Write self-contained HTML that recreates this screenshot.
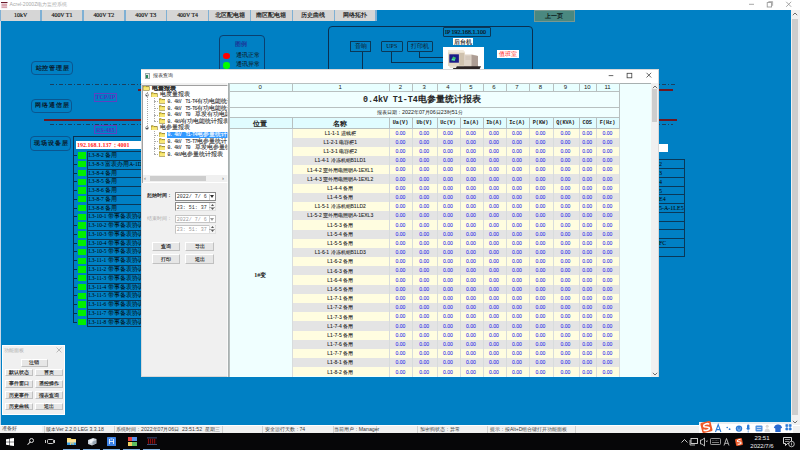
<!DOCTYPE html><html><head><meta charset="utf-8"><style>
*{box-sizing:border-box;margin:0;padding:0}
body{width:800px;height:450px;overflow:hidden;position:relative;background:#0080C4;font-family:"Liberation Sans",sans-serif;}
.a{position:absolute}
.t{position:absolute;white-space:pre;line-height:1}
.bx{position:absolute;border:1px solid #0a3858}
</style></head><body>

<div class="a" style="left:0;top:0;width:800px;height:10px;background:#fff"></div>
<svg class="a" style="left:1px;top:2px" width="6.5" height="6.5" viewBox="0 0 13 13"><rect x="0" y="0" width="13" height="13" fill="#f4eef0"></rect><rect x="0" y="0" width="13" height="2" fill="#6a1a2a"></rect><path d="M1 4.5h11M1 7.5h11M1 10.5h11" stroke="#c06070" stroke-width="1.3"></path></svg>
<div class="t" style="left:9.5px;top:2.2px;font-size:5.1px;color:#a8a8a8">Acrel-2000Z电力监控系统</div>
<svg class="a" style="left:740px;top:0px" width="60" height="10" viewBox="0 0 60 10"><path d="M9 4.3h5" stroke="#909090" stroke-width="0.8"></path><rect x="27.2" y="2.6" width="4.4" height="4.4" fill="none" stroke="#909090" stroke-width="0.8"></rect><path d="M28.4 1.6h4.2v4.2" fill="none" stroke="#909090" stroke-width="0.7"></path><path d="M46.2 1.8l5 5M51.2 1.8l-5 5" stroke="#909090" stroke-width="0.8"></path></svg>
<div class="a" style="left:0;top:10px;width:1px;height:415px;background:#c8d8e8"></div>
<div class="a" style="left:-0.50px;top:10px;width:42.25px;height:11.2px;background:#7fb0d4"></div>
<div class="a" style="left:1.00px;top:10px;width:39.25px;height:11.2px;background:#d6d6d6"></div>
<div class="t" style="left:1.00px;width:39.25px;text-align:center;top:13.35px;font-size:5.9px;color:#101010;-webkit-text-stroke:0.15px #101010;font-family:'Liberation Serif',serif">10kV</div>
<div class="a" style="left:40.25px;top:10px;width:43.40px;height:11.2px;background:#7fb0d4"></div>
<div class="a" style="left:41.75px;top:10px;width:40.40px;height:11.2px;background:#d6d6d6"></div>
<div class="t" style="left:41.75px;width:40.40px;text-align:center;top:13.35px;font-size:5.9px;color:#101010;-webkit-text-stroke:0.15px #101010;font-family:'Liberation Serif',serif">400V T1</div>
<div class="a" style="left:82.15px;top:10px;width:43.40px;height:11.2px;background:#7fb0d4"></div>
<div class="a" style="left:83.65px;top:10px;width:40.40px;height:11.2px;background:#d6d6d6"></div>
<div class="t" style="left:83.65px;width:40.40px;text-align:center;top:13.35px;font-size:5.9px;color:#101010;-webkit-text-stroke:0.15px #101010;font-family:'Liberation Serif',serif">400V T2</div>
<div class="a" style="left:124.05px;top:10px;width:43.40px;height:11.2px;background:#7fb0d4"></div>
<div class="a" style="left:125.55px;top:10px;width:40.40px;height:11.2px;background:#d6d6d6"></div>
<div class="t" style="left:125.55px;width:40.40px;text-align:center;top:13.35px;font-size:5.9px;color:#101010;-webkit-text-stroke:0.15px #101010;font-family:'Liberation Serif',serif">400V T3</div>
<div class="a" style="left:165.95px;top:10px;width:43.40px;height:11.2px;background:#7fb0d4"></div>
<div class="a" style="left:167.45px;top:10px;width:40.40px;height:11.2px;background:#d6d6d6"></div>
<div class="t" style="left:167.45px;width:40.40px;text-align:center;top:13.35px;font-size:5.9px;color:#101010;-webkit-text-stroke:0.15px #101010;font-family:'Liberation Serif',serif">400V T4</div>
<div class="a" style="left:207.85px;top:10px;width:43.40px;height:11.2px;background:#7fb0d4"></div>
<div class="a" style="left:209.35px;top:10px;width:40.40px;height:11.2px;background:#d6d6d6"></div>
<div class="t" style="left:209.35px;width:40.40px;text-align:center;top:13.40px;font-size:5.8px;color:#101010;-webkit-text-stroke:0.15px #101010;font-family:'Liberation Serif',serif">北区配电箱</div>
<div class="a" style="left:249.75px;top:10px;width:43.40px;height:11.2px;background:#7fb0d4"></div>
<div class="a" style="left:251.25px;top:10px;width:40.40px;height:11.2px;background:#d6d6d6"></div>
<div class="t" style="left:251.25px;width:40.40px;text-align:center;top:13.40px;font-size:5.8px;color:#101010;-webkit-text-stroke:0.15px #101010;font-family:'Liberation Serif',serif">南区配电箱</div>
<div class="a" style="left:291.65px;top:10px;width:43.40px;height:11.2px;background:#7fb0d4"></div>
<div class="a" style="left:293.15px;top:10px;width:40.40px;height:11.2px;background:#d6d6d6"></div>
<div class="t" style="left:293.15px;width:40.40px;text-align:center;top:13.40px;font-size:5.8px;color:#101010;-webkit-text-stroke:0.15px #101010;font-family:'Liberation Serif',serif">历史曲线</div>
<div class="a" style="left:333.55px;top:10px;width:43.40px;height:11.2px;background:#7fb0d4"></div>
<div class="a" style="left:335.05px;top:10px;width:40.40px;height:11.2px;background:#d6d6d6"></div>
<div class="t" style="left:335.05px;width:40.40px;text-align:center;top:13.40px;font-size:5.8px;color:#101010;-webkit-text-stroke:0.15px #101010;font-family:'Liberation Serif',serif">网络拓扑</div>
<div class="a" style="left:533.6px;top:10.3px;width:41.5px;height:11.3px;background:#4a8880;border:0.6px solid #7a9890"></div>
<div class="t" style="left:533.6px;width:41.5px;text-align:center;top:13.5px;font-size:5.8px;font-weight:bold;color:#0a1a1a;font-family:'Liberation Sans',sans-serif">上一页</div>
<div class="a" style="left:791px;top:10px;width:9px;height:415px;background:#f0f0f0"></div>
<div class="a" style="left:792px;top:18.5px;width:5.7px;height:396.5px;background:#cdcdcd"></div>
<svg class="a" style="left:792px;top:12px" width="6" height="4" viewBox="0 0 6 4"><path d="M0.8 3.2 L3 1 L5.2 3.2" fill="none" stroke="#606060" stroke-width="0.9"></path></svg>
<svg class="a" style="left:792px;top:419.5px" width="6" height="4" viewBox="0 0 6 4"><path d="M0.8 0.8 L3 3 L5.2 0.8" fill="none" stroke="#606060" stroke-width="0.9"></path></svg>
<div class="a" style="left:219px;top:35px;width:46px;height:50px;border:1px solid #0a4070;border-radius:4px"></div>
<div class="t" style="left:235px;top:40.5px;font-size:6px;font-weight:bold;color:#1a3a9a">图例</div>
<div class="a" style="left:223px;top:52.5px;width:6.5px;height:6.5px;border-radius:50%;background:#ff0000"></div>
<div class="a" style="left:223px;top:62px;width:6.5px;height:6.5px;border-radius:50%;background:#00ff00"></div>
<div class="t" style="left:236px;top:52.5px;font-size:5.8px;color:#101010">通讯正常</div>
<div class="t" style="left:236px;top:62px;font-size:5.8px;color:#101010">通讯异常</div>
<div class="a" style="left:327.5px;top:25.5px;width:205px;height:60px;border:1px solid #0a3050;border-radius:4px"></div>
<div class="bx" style="left:350px;top:40.5px;width:21px;height:11px"></div>
<div class="t" style="left:350px;width:21px;text-align:center;top:43px;font-size:6px;color:#101820">音响</div>
<div class="a" style="left:361.5px;top:51.5px;width:1px;height:20px;background:#0a3050"></div>
<div class="bx" style="left:380.5px;top:40.5px;width:22.5px;height:11px;border-radius:1px"></div>
<div class="t" style="left:380.5px;width:22.5px;text-align:center;top:43px;font-size:6px;color:#101820;font-family:'Liberation Serif',serif">UPS</div>
<div class="a" style="left:390.5px;top:51.5px;width:53px;height:11px;border-left:1px solid #0a3050;border-bottom:1px solid #0a3050"></div>
<div class="bx" style="left:406.5px;top:40.5px;width:26px;height:11px;border-radius:1px"></div>
<div class="t" style="left:406.5px;width:26px;text-align:center;top:43px;font-size:6px;color:#101820">打印机</div>
<div class="a" style="left:418.5px;top:51.5px;width:25px;height:6px;border-left:1px solid #0a3050;border-bottom:1px solid #0a3050"></div>
<div class="bx" style="left:443px;top:27.25px;width:47.5px;height:9.25px;border-radius:1px"></div>
<div class="t" style="left:445px;top:29px;font-size:6px;color:#101820;-webkit-text-stroke:0.2px #101820;font-family:'Liberation Serif',serif">IP 192.168.1.100</div>
<div class="a" style="left:453px;top:37.5px;width:20px;height:7.5px;background:#fff"></div>
<div class="t" style="left:453px;width:20px;text-align:center;top:38.5px;font-size:6px;color:#202020;-webkit-text-stroke:0.15px #202020">后台机</div>
<div class="a" style="left:443px;top:46.5px;width:41px;height:30px;background:#fff"></div>
<svg class="a" style="left:443px;top:46.5px" width="41" height="23" viewBox="0 0 41 23"><path d="M5 3.5h15.5l1.5 2v13.5h-17z" fill="#e4d8c4"></path><path d="M5 3.5h15.5l1.5 2h-17z" fill="#f2eadc"></path><rect x="6.3" y="7.3" width="9.6" height="8.4" fill="#1c1c88"></rect><path d="M8 13.2 l2.2-3.6 2.8 1.2 -1.4 3.2z" fill="#38c070"></path><path d="M9 12.5 l3 0.5" stroke="#60e0e0" stroke-width="0.8"></path><rect x="16.3" y="6" width="4.7" height="12.5" fill="#cfc2ae"></rect><path d="M21 7.5h8.5l5.5 1.5v12.3h-14z" fill="#ddd2c6"></path><path d="M28.5 7.8l6.5 1.2v12.3h-6.5z" fill="#ad9d94"></path><path d="M22.5 10h5M22.5 12h5" stroke="#b8aca0" stroke-width="0.5"></path><path d="M9 19.2h29l-1.5 3h-26z" fill="#2c2424"></path><path d="M6 18.8h8l-1 2.2h-6z" fill="#e8e0d4"></path></svg>
<div class="a" style="left:497px;top:50px;width:22px;height:8px;background:#fff"></div>
<div class="t" style="left:497px;width:22px;text-align:center;top:51px;font-size:6px;color:#ff2020">值班室</div>
<div class="a" style="left:31px;top:61px;width:41.5px;height:14px;border:1px solid #0b5690;border-radius:4px"></div>
<div class="t" style="left:32px;width:41.5px;text-align:center;top:65.60px;font-size:5.8px;letter-spacing:0.9px;font-weight:bold;color:#0a1828">站控管理层</div>
<div class="a" style="left:31px;top:98.5px;width:41px;height:14px;border:1px solid #0b5690;border-radius:4px"></div>
<div class="t" style="left:32px;width:41px;text-align:center;top:103.10px;font-size:5.8px;letter-spacing:0.9px;font-weight:bold;color:#0a1828">网络通信层</div>
<div class="a" style="left:30px;top:136px;width:40.5px;height:15px;border:1px solid #0b5690;border-radius:4px"></div>
<div class="t" style="left:31px;width:40.5px;text-align:center;top:141.10px;font-size:5.8px;letter-spacing:0.9px;font-weight:bold;color:#0a1828">现场设备层</div>
<div class="a" style="left:50px;top:84px;width:625px;height:1px;background:repeating-linear-gradient(90deg,#1a4060 0 4px,transparent 4px 6px,#1a4060 6px 7px,transparent 7px 9px)"></div>
<div class="a" style="left:50px;top:124px;width:623px;height:1px;background:repeating-linear-gradient(90deg,#1a4060 0 4px,transparent 4px 6px,#1a4060 6px 7px,transparent 7px 9px)"></div>
<div class="a" style="left:138px;top:89px;width:535px;height:2px;background:#6e1822"></div>
<div class="a" style="left:44px;top:119px;width:633px;height:2px;background:#6e1822"></div>
<div class="a" style="left:94px;top:92.5px;width:23px;height:9px;border:1px solid #6040c0"></div>
<div class="t" style="left:94px;width:23px;text-align:center;top:94px;font-size:6px;font-weight:bold;color:#5030c0;font-family:'Liberation Serif',serif">TCP/IP</div>
<div class="a" style="left:94px;top:125px;width:23px;height:9px;border:1px solid #6040c0"></div>
<div class="t" style="left:94px;width:23px;text-align:center;top:126.5px;font-size:6px;font-weight:bold;color:#5030c0;font-family:'Liberation Serif',serif">RS-485</div>
<div class="a" style="left:73px;top:135.5px;width:120px;height:1px;background:#0a3050"></div>
<div class="a" style="left:76px;top:140.7px;width:100px;height:8px;background:#fff"></div>
<div class="t" style="left:77px;top:142px;font-size:6px;font-weight:bold;color:#ff2020;font-family:'Liberation Serif',serif">192.168.1.137：4001</div>
<div class="a" style="left:73px;top:135.5px;width:1px;height:186px;background:#0a3050"></div>
<div class="a" style="left:73px;top:155.00px;width:4px;height:1px;background:#0a3050"></div>
<div class="a" style="left:77.8px;top:152.30px;width:8.6px;height:6.3px;background:#00f000"></div>
<div class="bx" style="left:87px;top:151.00px;width:100px;height:9.77px"></div>
<div class="t" style="left:88.5px;top:153.00px;font-size:5.5px;color:#000;font-family:'Liberation Serif',serif">L3-8-2 备用</div>
<div class="a" style="left:73px;top:163.77px;width:4px;height:1px;background:#0a3050"></div>
<div class="a" style="left:77.8px;top:161.07px;width:8.6px;height:6.3px;background:#00f000"></div>
<div class="bx" style="left:87px;top:159.77px;width:100px;height:9.77px"></div>
<div class="t" style="left:88.5px;top:161.77px;font-size:5.5px;color:#000;font-family:'Liberation Serif',serif">L3-8-3 富表办用A-1DT1</div>
<div class="a" style="left:73px;top:172.54px;width:4px;height:1px;background:#0a3050"></div>
<div class="a" style="left:77.8px;top:169.84px;width:8.6px;height:6.3px;background:#00f000"></div>
<div class="bx" style="left:87px;top:168.54px;width:100px;height:9.77px"></div>
<div class="t" style="left:88.5px;top:170.54px;font-size:5.5px;color:#000;font-family:'Liberation Serif',serif">L3-8-4 备用</div>
<div class="a" style="left:73px;top:181.31px;width:4px;height:1px;background:#0a3050"></div>
<div class="a" style="left:77.8px;top:178.61px;width:8.6px;height:6.3px;background:#00f000"></div>
<div class="bx" style="left:87px;top:177.31px;width:100px;height:9.77px"></div>
<div class="t" style="left:88.5px;top:179.31px;font-size:5.5px;color:#000;font-family:'Liberation Serif',serif">L3-8-5 备用</div>
<div class="a" style="left:73px;top:190.08px;width:4px;height:1px;background:#0a3050"></div>
<div class="a" style="left:77.8px;top:187.38px;width:8.6px;height:6.3px;background:#00f000"></div>
<div class="bx" style="left:87px;top:186.08px;width:100px;height:9.77px"></div>
<div class="t" style="left:88.5px;top:188.08px;font-size:5.5px;color:#000;font-family:'Liberation Serif',serif">L3-8-6 备用</div>
<div class="a" style="left:73px;top:198.85px;width:4px;height:1px;background:#0a3050"></div>
<div class="a" style="left:77.8px;top:196.15px;width:8.6px;height:6.3px;background:#00f000"></div>
<div class="bx" style="left:87px;top:194.85px;width:100px;height:9.77px"></div>
<div class="t" style="left:88.5px;top:196.85px;font-size:5.5px;color:#000;font-family:'Liberation Serif',serif">L3-8-7 备用</div>
<div class="a" style="left:73px;top:207.62px;width:4px;height:1px;background:#0a3050"></div>
<div class="a" style="left:77.8px;top:204.92px;width:8.6px;height:6.3px;background:#00f000"></div>
<div class="bx" style="left:87px;top:203.62px;width:100px;height:9.77px"></div>
<div class="t" style="left:88.5px;top:205.62px;font-size:5.5px;color:#000;font-family:'Liberation Serif',serif">L3-8-8 备用</div>
<div class="a" style="left:73px;top:216.39px;width:4px;height:1px;background:#0a3050"></div>
<div class="a" style="left:77.8px;top:213.69px;width:8.6px;height:6.3px;background:#00f000"></div>
<div class="bx" style="left:87px;top:212.39px;width:100px;height:9.77px"></div>
<div class="t" style="left:88.5px;top:214.39px;font-size:5.5px;color:#000;font-family:'Liberation Serif',serif">L3-10-1 带事备表协调DCS-A</div>
<div class="a" style="left:73px;top:225.16px;width:4px;height:1px;background:#0a3050"></div>
<div class="a" style="left:77.8px;top:222.46px;width:8.6px;height:6.3px;background:#00f000"></div>
<div class="bx" style="left:87px;top:221.16px;width:100px;height:9.77px"></div>
<div class="t" style="left:88.5px;top:223.16px;font-size:5.5px;color:#000;font-family:'Liberation Serif',serif">L3-10-2 带事备表协调A-</div>
<div class="a" style="left:73px;top:233.93px;width:4px;height:1px;background:#0a3050"></div>
<div class="a" style="left:77.8px;top:231.23px;width:8.6px;height:6.3px;background:#00f000"></div>
<div class="bx" style="left:87px;top:229.93px;width:100px;height:9.77px"></div>
<div class="t" style="left:88.5px;top:231.93px;font-size:5.5px;color:#000;font-family:'Liberation Serif',serif">L3-10-3 带事备表协调A-</div>
<div class="a" style="left:73px;top:242.70px;width:4px;height:1px;background:#0a3050"></div>
<div class="a" style="left:77.8px;top:240.00px;width:8.6px;height:6.3px;background:#00f000"></div>
<div class="bx" style="left:87px;top:238.70px;width:100px;height:9.77px"></div>
<div class="t" style="left:88.5px;top:240.70px;font-size:5.5px;color:#000;font-family:'Liberation Serif',serif">L3-10-4 带事备表协调A-</div>
<div class="a" style="left:73px;top:251.47px;width:4px;height:1px;background:#0a3050"></div>
<div class="a" style="left:77.8px;top:248.77px;width:8.6px;height:6.3px;background:#00f000"></div>
<div class="bx" style="left:87px;top:247.47px;width:100px;height:9.77px"></div>
<div class="t" style="left:88.5px;top:249.47px;font-size:5.5px;color:#000;font-family:'Liberation Serif',serif">L3-10-5 带事备表协调A-</div>
<div class="a" style="left:73px;top:260.24px;width:4px;height:1px;background:#0a3050"></div>
<div class="a" style="left:77.8px;top:257.54px;width:8.6px;height:6.3px;background:#00f000"></div>
<div class="bx" style="left:87px;top:256.24px;width:100px;height:9.77px"></div>
<div class="t" style="left:88.5px;top:258.24px;font-size:5.5px;color:#000;font-family:'Liberation Serif',serif">L3-11-1 带事备表协调A-</div>
<div class="a" style="left:73px;top:269.01px;width:4px;height:1px;background:#0a3050"></div>
<div class="a" style="left:77.8px;top:266.31px;width:8.6px;height:6.3px;background:#00f000"></div>
<div class="bx" style="left:87px;top:265.01px;width:100px;height:9.77px"></div>
<div class="t" style="left:88.5px;top:267.01px;font-size:5.5px;color:#000;font-family:'Liberation Serif',serif">L3-11-2 带事备表协调A-</div>
<div class="a" style="left:73px;top:277.78px;width:4px;height:1px;background:#0a3050"></div>
<div class="a" style="left:77.8px;top:275.08px;width:8.6px;height:6.3px;background:#00f000"></div>
<div class="bx" style="left:87px;top:273.78px;width:100px;height:9.77px"></div>
<div class="t" style="left:88.5px;top:275.78px;font-size:5.5px;color:#000;font-family:'Liberation Serif',serif">L3-11-3 带事备表协调A-</div>
<div class="a" style="left:73px;top:286.55px;width:4px;height:1px;background:#0a3050"></div>
<div class="a" style="left:77.8px;top:283.85px;width:8.6px;height:6.3px;background:#00f000"></div>
<div class="bx" style="left:87px;top:282.55px;width:100px;height:9.77px"></div>
<div class="t" style="left:88.5px;top:284.55px;font-size:5.5px;color:#000;font-family:'Liberation Serif',serif">L3-11-4 带事备表协调A-</div>
<div class="a" style="left:73px;top:295.32px;width:4px;height:1px;background:#0a3050"></div>
<div class="a" style="left:77.8px;top:292.62px;width:8.6px;height:6.3px;background:#00f000"></div>
<div class="bx" style="left:87px;top:291.32px;width:100px;height:9.77px"></div>
<div class="t" style="left:88.5px;top:293.32px;font-size:5.5px;color:#000;font-family:'Liberation Serif',serif">L3-11-5 带事备表协调A-</div>
<div class="a" style="left:73px;top:304.09px;width:4px;height:1px;background:#0a3050"></div>
<div class="a" style="left:77.8px;top:301.39px;width:8.6px;height:6.3px;background:#00f000"></div>
<div class="bx" style="left:87px;top:300.09px;width:100px;height:9.77px"></div>
<div class="t" style="left:88.5px;top:302.09px;font-size:5.5px;color:#000;font-family:'Liberation Serif',serif">L3-11-6 带事备表协调A-</div>
<div class="a" style="left:73px;top:312.86px;width:4px;height:1px;background:#0a3050"></div>
<div class="a" style="left:77.8px;top:310.16px;width:8.6px;height:6.3px;background:#00f000"></div>
<div class="bx" style="left:87px;top:308.86px;width:100px;height:9.77px"></div>
<div class="t" style="left:88.5px;top:310.86px;font-size:5.5px;color:#000;font-family:'Liberation Serif',serif">L3-11-7 带事备表协调A-</div>
<div class="a" style="left:73px;top:321.63px;width:4px;height:1px;background:#0a3050"></div>
<div class="a" style="left:77.8px;top:318.93px;width:8.6px;height:6.3px;background:#00f000"></div>
<div class="bx" style="left:87px;top:317.63px;width:100px;height:9.77px"></div>
<div class="t" style="left:88.5px;top:319.63px;font-size:5.5px;color:#000;font-family:'Liberation Serif',serif">L3-11-8 带事备表协调A-</div>
<div class="a" style="left:640px;top:144px;width:28px;height:8px;background:#fff"></div>
<div class="bx" style="left:640px;top:159.30px;width:45px;height:9.75px"></div>
<div class="t" style="left:659px;top:161.30px;font-size:6px;color:#000;font-family:'Liberation Serif',serif">2</div>
<div class="bx" style="left:640px;top:168.05px;width:45px;height:9.75px"></div>
<div class="t" style="left:659px;top:170.05px;font-size:6px;color:#000;font-family:'Liberation Serif',serif">3</div>
<div class="bx" style="left:640px;top:176.80px;width:45px;height:9.75px"></div>
<div class="t" style="left:659px;top:178.80px;font-size:6px;color:#000;font-family:'Liberation Serif',serif">4</div>
<div class="bx" style="left:640px;top:185.55px;width:45px;height:9.75px"></div>
<div class="t" style="left:659px;top:187.55px;font-size:6px;color:#000;font-family:'Liberation Serif',serif">5</div>
<div class="bx" style="left:640px;top:194.30px;width:45px;height:9.75px"></div>
<div class="t" style="left:659px;top:196.30px;font-size:6px;color:#000;font-family:'Liberation Serif',serif">E4</div>
<div class="bx" style="left:640px;top:203.05px;width:45px;height:9.75px"></div>
<div class="t" style="left:659px;top:205.05px;font-size:6px;color:#000;font-family:'Liberation Serif',serif">5-A-1LE5</div>
<div class="bx" style="left:640px;top:211.80px;width:45px;height:9.75px"></div>
<div class="t" style="left:659px;top:213.80px;font-size:6px;color:#000;font-family:'Liberation Serif',serif"></div>
<div class="bx" style="left:640px;top:220.55px;width:45px;height:9.75px"></div>
<div class="t" style="left:659px;top:222.55px;font-size:6px;color:#000;font-family:'Liberation Serif',serif"></div>
<div class="bx" style="left:640px;top:229.30px;width:45px;height:9.75px"></div>
<div class="t" style="left:659px;top:231.30px;font-size:6px;color:#000;font-family:'Liberation Serif',serif"></div>
<div class="bx" style="left:640px;top:238.05px;width:45px;height:9.75px"></div>
<div class="t" style="left:659px;top:240.05px;font-size:6px;color:#000;font-family:'Liberation Serif',serif">FC</div>
<div class="bx" style="left:640px;top:246.80px;width:45px;height:9.75px"></div>
<div class="t" style="left:659px;top:248.80px;font-size:6px;color:#000;font-family:'Liberation Serif',serif"></div>
<div class="a" style="left:140.8px;top:69.3px;width:518.0px;height:307.9px;background:#f0f0f0;border:1px solid #d8d8d8"></div>
<div class="a" style="left:141.3px;top:69.8px;width:517.0px;height:13px;background:#fff"></div>
<div class="a" style="left:144.5px;top:73px;width:5.5px;height:6px;background:#e8e8e8;border:1px solid #9aa"></div>
<div class="a" style="left:145.5px;top:74.5px;width:2px;height:3px;background:#2a8a5a"></div>
<div class="t" style="left:153px;top:73px;font-size:5px;color:#303030">报表查询</div>
<svg class="a" style="left:600px;top:70px" width="58" height="12" viewBox="0 0 58 12"><path d="M8.7 5.6h4.6" stroke="#404040" stroke-width="0.8"></path><rect x="27.1" y="3.3" width="4.7" height="4.5" fill="none" stroke="#404040" stroke-width="0.8"></rect><path d="M46.5 2.8l4.7 4.7M51.2 2.8l-4.7 4.7" stroke="#404040" stroke-width="0.8"></path></svg>
<div class="a" style="left:142px;top:84.5px;width:86px;height:98px;background:#fff;border-top:1px solid #a0a0a0;border-left:1px solid #a0a0a0"></div>
<div class="a" style="left:143px;top:85.5px;width:85px;height:89px;overflow:hidden">
<svg class="a" style="left:0.40px;top:-0.30px" width="6.5" height="5.5" viewBox="0 0 13 11"><path d="M0.5 1.5 h4 l1.5 1.5 h6.5 v7.5 h-12 z" fill="#e8d040" stroke="#706010" stroke-width="1.2"></path><path d="M1 4.5 h11 v5.5 h-11z" fill="#f8e878"></path></svg>
<div class="t" style="left:7.6px;top:-0.10px;font-size:5.8px;color:#303030;-webkit-text-stroke:0.1px #303030;font-weight:bold;padding:0.3px 1px">电量报表</div>
<div class="a" style="left:1.5px;top:7.32px;width:4px;height:4px;border:0.5px solid #aaa;border-radius:50%;background:#fff"></div>
<div class="a" style="left:2.5px;top:9.07px;width:2px;height:0.5px;background:#555"></div>
<svg class="a" style="left:8.20px;top:6.32px" width="6.5" height="5.5" viewBox="0 0 13 11"><path d="M0.5 1.5 h4 l1.5 1.5 h6.5 v7.5 h-12 z" fill="#e8d040" stroke="#706010" stroke-width="1.2"></path><path d="M1 4.5 h11 v5.5 h-11z" fill="#f8e878"></path></svg>
<div class="t" style="left:16.0px;top:6.52px;font-size:5.8px;color:#303030;-webkit-text-stroke:0.1px #303030;padding:0.3px 1px">电度量报表</div>
<div class="a" style="left:11px;top:15.94px;width:4px;height:0;border-top:0.5px dotted #aaa"></div>
<svg class="a" style="left:15.60px;top:12.94px" width="6.5" height="5.5" viewBox="0 0 13 11"><path d="M0.5 1.5 h4 l1.5 1.5 h6.5 v7.5 h-12 z" fill="#e8d040" stroke="#706010" stroke-width="1.2"></path><path d="M1 4.5 h11 v5.5 h-11z" fill="#f8e878"></path></svg>
<div class="t" style="left:23.5px;top:13.14px;font-size:5.8px;color:#303030;-webkit-text-stroke:0.1px #303030;padding:0.3px 1px"><span style="font-family:Liberation Mono,monospace;font-size:4.6px;letter-spacing:-0.5px">0. 4kV  T1-T4</span>有功电能统计</div>
<div class="a" style="left:11px;top:22.56px;width:4px;height:0;border-top:0.5px dotted #aaa"></div>
<svg class="a" style="left:15.60px;top:19.56px" width="6.5" height="5.5" viewBox="0 0 13 11"><path d="M0.5 1.5 h4 l1.5 1.5 h6.5 v7.5 h-12 z" fill="#e8d040" stroke="#706010" stroke-width="1.2"></path><path d="M1 4.5 h11 v5.5 h-11z" fill="#f8e878"></path></svg>
<div class="t" style="left:23.5px;top:19.76px;font-size:5.8px;color:#303030;-webkit-text-stroke:0.1px #303030;padding:0.3px 1px"><span style="font-family:Liberation Mono,monospace;font-size:4.6px;letter-spacing:-0.5px">0. 4kV  T5-T6</span>有功电能统计</div>
<div class="a" style="left:11px;top:29.18px;width:4px;height:0;border-top:0.5px dotted #aaa"></div>
<svg class="a" style="left:15.60px;top:26.18px" width="6.5" height="5.5" viewBox="0 0 13 11"><path d="M0.5 1.5 h4 l1.5 1.5 h6.5 v7.5 h-12 z" fill="#e8d040" stroke="#706010" stroke-width="1.2"></path><path d="M1 4.5 h11 v5.5 h-11z" fill="#f8e878"></path></svg>
<div class="t" style="left:23.5px;top:26.38px;font-size:5.8px;color:#303030;-webkit-text-stroke:0.1px #303030;padding:0.3px 1px"><span style="font-family:Liberation Mono,monospace;font-size:4.6px;letter-spacing:-0.5px">0. 4kV  T0  </span>草发有功电能统</div>
<div class="a" style="left:11px;top:35.80px;width:4px;height:0;border-top:0.5px dotted #aaa"></div>
<svg class="a" style="left:15.60px;top:32.80px" width="6.5" height="5.5" viewBox="0 0 13 11"><path d="M0.5 1.5 h4 l1.5 1.5 h6.5 v7.5 h-12 z" fill="#e8d040" stroke="#706010" stroke-width="1.2"></path><path d="M1 4.5 h11 v5.5 h-11z" fill="#f8e878"></path></svg>
<div class="t" style="left:23.5px;top:33.00px;font-size:5.8px;color:#303030;-webkit-text-stroke:0.1px #303030;padding:0.3px 1px"><span style="font-family:Liberation Mono,monospace;font-size:4.6px;letter-spacing:-0.5px">0. 4kV</span>有功电能统计报表</div>
<div class="a" style="left:1.5px;top:40.42px;width:4px;height:4px;border:0.5px solid #aaa;border-radius:50%;background:#fff"></div>
<div class="a" style="left:2.5px;top:42.17px;width:2px;height:0.5px;background:#555"></div>
<svg class="a" style="left:8.20px;top:39.42px" width="6.5" height="5.5" viewBox="0 0 13 11"><path d="M0.5 1.5 h4 l1.5 1.5 h6.5 v7.5 h-12 z" fill="#e8d040" stroke="#706010" stroke-width="1.2"></path><path d="M1 4.5 h11 v5.5 h-11z" fill="#f8e878"></path></svg>
<div class="t" style="left:16.0px;top:39.62px;font-size:5.8px;color:#303030;-webkit-text-stroke:0.1px #303030;padding:0.3px 1px">电参量报表</div>
<div class="a" style="left:11px;top:49.04px;width:4px;height:0;border-top:0.5px dotted #aaa"></div>
<svg class="a" style="left:15.60px;top:46.04px" width="6.5" height="5.5" viewBox="0 0 13 11"><path d="M0.5 1.5 h4 l1.5 1.5 h6.5 v7.5 h-12 z" fill="#e8d040" stroke="#706010" stroke-width="1.2"></path><path d="M1 4.5 h11 v5.5 h-11z" fill="#f8e878"></path></svg>
<div class="t" style="left:23.5px;top:46.24px;font-size:5.8px;color:#fff;-webkit-text-stroke:0.1px #fff;background:#3399ff;padding:0.3px 1px"><span style="font-family:Liberation Mono,monospace;font-size:4.6px;letter-spacing:-0.5px">0. 4kV  T1-T4</span>电参量统计</div>
<div class="a" style="left:11px;top:55.66px;width:4px;height:0;border-top:0.5px dotted #aaa"></div>
<svg class="a" style="left:15.60px;top:52.66px" width="6.5" height="5.5" viewBox="0 0 13 11"><path d="M0.5 1.5 h4 l1.5 1.5 h6.5 v7.5 h-12 z" fill="#e8d040" stroke="#706010" stroke-width="1.2"></path><path d="M1 4.5 h11 v5.5 h-11z" fill="#f8e878"></path></svg>
<div class="t" style="left:23.5px;top:52.86px;font-size:5.8px;color:#303030;-webkit-text-stroke:0.1px #303030;padding:0.3px 1px"><span style="font-family:Liberation Mono,monospace;font-size:4.6px;letter-spacing:-0.5px">0. 4kV  T5-T7</span>电参量统计</div>
<div class="a" style="left:11px;top:62.28px;width:4px;height:0;border-top:0.5px dotted #aaa"></div>
<svg class="a" style="left:15.60px;top:59.28px" width="6.5" height="5.5" viewBox="0 0 13 11"><path d="M0.5 1.5 h4 l1.5 1.5 h6.5 v7.5 h-12 z" fill="#e8d040" stroke="#706010" stroke-width="1.2"></path><path d="M1 4.5 h11 v5.5 h-11z" fill="#f8e878"></path></svg>
<div class="t" style="left:23.5px;top:59.48px;font-size:5.8px;color:#303030;-webkit-text-stroke:0.1px #303030;padding:0.3px 1px"><span style="font-family:Liberation Mono,monospace;font-size:4.6px;letter-spacing:-0.5px">0. 4kV  T0  </span>草发电参量统</div>
<div class="a" style="left:11px;top:68.90px;width:4px;height:0;border-top:0.5px dotted #aaa"></div>
<svg class="a" style="left:15.60px;top:65.90px" width="6.5" height="5.5" viewBox="0 0 13 11"><path d="M0.5 1.5 h4 l1.5 1.5 h6.5 v7.5 h-12 z" fill="#e8d040" stroke="#706010" stroke-width="1.2"></path><path d="M1 4.5 h11 v5.5 h-11z" fill="#f8e878"></path></svg>
<div class="t" style="left:23.5px;top:66.10px;font-size:5.8px;color:#303030;-webkit-text-stroke:0.1px #303030;padding:0.3px 1px"><span style="font-family:Liberation Mono,monospace;font-size:4.6px;letter-spacing:-0.5px">0. 4kV</span>电参量统计报表</div>
<div class="a" style="left:3.5px;top:6.5px;width:0;height:36px;border-left:0.5px dotted #aaa"></div>
<div class="a" style="left:11px;top:12.5px;width:0;height:23px;border-left:0.5px dotted #aaa"></div>
<div class="a" style="left:11px;top:45.5px;width:0;height:23px;border-left:0.5px dotted #aaa"></div>
</div>
<div class="a" style="left:142.5px;top:174.7px;width:85.5px;height:7.5px;background:#f0f0f0"></div>
<div class="a" style="left:150px;top:176px;width:56px;height:5px;background:#cdcdcd"></div>
<div class="t" style="left:144px;top:175px;font-size:6px;color:#666">‹</div>
<div class="t" style="left:222px;top:175px;font-size:6px;color:#666">›</div>
<div class="t" style="left:147.3px;top:193.5px;font-size:4.9px;color:#181818;-webkit-text-stroke:0.15px #181818">起始时间：</div>
<div class="a" style="left:175.3px;top:192px;width:40.5px;height:8.5px;background:#fff;border:1px solid #8a8a8a"></div>
<div class="t" style="left:176.8px;top:195.3px;font-size:5px;color:#303030;font-family:'Liberation Mono',monospace">2022/ 7/ 6</div>
<div class="a" style="left:208.8px;top:193.5px;width:6px;height:6px;background:#fff;border-left:0.5px solid #ccc"></div>
<svg class="a" style="left:210px;top:195.3px" width="4" height="3" viewBox="0 0 4 3"><path d="M0 0h4l-2 3z" fill="#303030"></path></svg>
<div class="a" style="left:175.3px;top:202.3px;width:40.5px;height:8.7px;background:#fff;border:1px solid #8a8a8a;border-right-color:#e0e0e0;border-bottom-color:#e0e0e0"></div>
<div class="t" style="left:176.8px;top:205.60000000000002px;font-size:5px;color:#303030;font-family:'Liberation Mono',monospace">23: 51: 37</div>
<div class="a" style="left:209px;top:202.8px;width:6.3px;height:7.7px;background:#f4f4f4;border-left:0.5px solid #ddd"></div>
<div class="a" style="left:209px;top:206.5px;width:6.3px;height:0.5px;background:#aaa"></div>
<svg class="a" style="left:210.8px;top:203.8px" width="3" height="2" viewBox="0 0 3 2"><path d="M0 2h3l-1.5-2z" fill="#555"></path></svg>
<svg class="a" style="left:210.8px;top:207.8px" width="3" height="2" viewBox="0 0 3 2"><path d="M0 0h3l-1.5 2z" fill="#555"></path></svg>
<div class="t" style="left:147.3px;top:216.5px;font-size:4.9px;color:#a8a8a8">结束时间：</div>
<div class="a" style="left:175.3px;top:214.8px;width:40.5px;height:8.5px;background:#fff;border:1px solid #c4c4c4"></div>
<div class="t" style="left:176.8px;top:218.10000000000002px;font-size:5px;color:#9a9a9a;font-family:'Liberation Mono',monospace">2022/ 7/ 6</div>
<div class="a" style="left:208.8px;top:216.3px;width:6px;height:6px;background:#fff;border-left:0.5px solid #ccc"></div>
<svg class="a" style="left:210px;top:218.10000000000002px" width="4" height="3" viewBox="0 0 4 3"><path d="M0 0h4l-2 3z" fill="#9a9a9a"></path></svg>
<div class="a" style="left:175.3px;top:224.9px;width:40.5px;height:8.7px;background:#fff;border:1px solid #c4c4c4;border-right-color:#e0e0e0;border-bottom-color:#e0e0e0"></div>
<div class="t" style="left:176.8px;top:228.20000000000002px;font-size:5px;color:#9a9a9a;font-family:'Liberation Mono',monospace">23: 51: 37</div>
<div class="a" style="left:209px;top:225.4px;width:6.3px;height:7.7px;background:#f4f4f4;border-left:0.5px solid #ddd"></div>
<div class="a" style="left:209px;top:229.1px;width:6.3px;height:0.5px;background:#aaa"></div>
<svg class="a" style="left:210.8px;top:226.4px" width="3" height="2" viewBox="0 0 3 2"><path d="M0 2h3l-1.5-2z" fill="#555"></path></svg>
<svg class="a" style="left:210.8px;top:230.4px" width="3" height="2" viewBox="0 0 3 2"><path d="M0 0h3l-1.5 2z" fill="#555"></path></svg>
<div class="a" style="left:151.7px;top:241.7px;width:28.6px;height:9.6px;background:#e6e6e6;border:1px solid #adadad;border-color:#fff #c0c0c0 #c0c0c0 #fff"></div>
<div class="t" style="left:151.7px;width:28.6px;text-align:center;top:244.00px;font-size:5px;color:#181818;-webkit-text-stroke:0.12px #181818">查询</div>
<div class="a" style="left:185.4px;top:241.7px;width:29.1px;height:9.6px;background:#e6e6e6;border:1px solid #adadad;border-color:#fff #c0c0c0 #c0c0c0 #fff"></div>
<div class="t" style="left:185.4px;width:29.1px;text-align:center;top:244.00px;font-size:5px;color:#181818;-webkit-text-stroke:0.12px #181818">导出</div>
<div class="a" style="left:151.7px;top:254.4px;width:28.6px;height:9.4px;background:#e6e6e6;border:1px solid #adadad;border-color:#fff #c0c0c0 #c0c0c0 #fff"></div>
<div class="t" style="left:151.7px;width:28.6px;text-align:center;top:256.60px;font-size:5px;color:#181818;-webkit-text-stroke:0.12px #181818">打印</div>
<div class="a" style="left:185.4px;top:254.4px;width:29.1px;height:9.4px;background:#e6e6e6;border:1px solid #adadad;border-color:#fff #c0c0c0 #c0c0c0 #fff"></div>
<div class="t" style="left:185.4px;width:29.1px;text-align:center;top:256.60px;font-size:5px;color:#181818;-webkit-text-stroke:0.12px #181818">退出</div>
<div class="a" style="left:227.9px;top:82.5px;width:430.4px;height:294.2px;background:#f0ffff;border-left:1.3px solid #a8b0b0;border-top:1px solid #a8b0b0;box-shadow:-0.6px 0 0 #fff"></div>
<div class="a" style="left:228.75px;top:82.5px;width:63.75px;height:9px;background:#e8ffff;border:1px solid #b8c0c0"></div>
<div class="t" style="left:228.75px;width:62.75px;text-align:center;top:84px;font-size:6px;color:#202020">0</div>
<div class="a" style="left:291.5px;top:82.5px;width:98.5px;height:9px;background:#e8ffff;border:1px solid #b8c0c0"></div>
<div class="t" style="left:291.5px;width:97.5px;text-align:center;top:84px;font-size:6px;color:#202020">1</div>
<div class="a" style="left:389px;top:82.5px;width:24px;height:9px;background:#e8ffff;border:1px solid #b8c0c0"></div>
<div class="t" style="left:389px;width:23px;text-align:center;top:84px;font-size:6px;color:#202020">2</div>
<div class="a" style="left:412px;top:82.5px;width:25.5px;height:9px;background:#e8ffff;border:1px solid #b8c0c0"></div>
<div class="t" style="left:412px;width:24.5px;text-align:center;top:84px;font-size:6px;color:#202020">3</div>
<div class="a" style="left:436.5px;top:82.5px;width:24.0px;height:9px;background:#e8ffff;border:1px solid #b8c0c0"></div>
<div class="t" style="left:436.5px;width:23.0px;text-align:center;top:84px;font-size:6px;color:#202020">4</div>
<div class="a" style="left:459.5px;top:82.5px;width:24.0px;height:9px;background:#e8ffff;border:1px solid #b8c0c0"></div>
<div class="t" style="left:459.5px;width:23.0px;text-align:center;top:84px;font-size:6px;color:#202020">5</div>
<div class="a" style="left:482.5px;top:82.5px;width:24.0px;height:9px;background:#e8ffff;border:1px solid #b8c0c0"></div>
<div class="t" style="left:482.5px;width:23.0px;text-align:center;top:84px;font-size:6px;color:#202020">6</div>
<div class="a" style="left:505.5px;top:82.5px;width:24.0px;height:9px;background:#e8ffff;border:1px solid #b8c0c0"></div>
<div class="t" style="left:505.5px;width:23.0px;text-align:center;top:84px;font-size:6px;color:#202020">7</div>
<div class="a" style="left:528.5px;top:82.5px;width:25.0px;height:9px;background:#e8ffff;border:1px solid #b8c0c0"></div>
<div class="t" style="left:528.5px;width:24.0px;text-align:center;top:84px;font-size:6px;color:#202020">8</div>
<div class="a" style="left:552.5px;top:82.5px;width:27.0px;height:9px;background:#e8ffff;border:1px solid #b8c0c0"></div>
<div class="t" style="left:552.5px;width:26.0px;text-align:center;top:84px;font-size:6px;color:#202020">9</div>
<div class="a" style="left:578.5px;top:82.5px;width:18.5px;height:9px;background:#e8ffff;border:1px solid #b8c0c0"></div>
<div class="t" style="left:578.5px;width:17.5px;text-align:center;top:84px;font-size:6px;color:#202020">10</div>
<div class="a" style="left:596px;top:82.5px;width:24px;height:9px;background:#e8ffff;border:1px solid #b8c0c0"></div>
<div class="t" style="left:596px;width:23px;text-align:center;top:84px;font-size:6px;color:#202020">11</div>
<div class="a" style="left:228.75px;top:90.75px;width:391.25px;height:17px;background:#f0ffff;border:1px solid #b8c0c0"></div>
<div class="t" style="left:363px;top:94.3px;font-size:9.5px;font-weight:bold;color:#282828"><span style="font-family:'Liberation Mono',monospace;font-size:8.4px;letter-spacing:-0.05px">0.4kV T1-T4</span><span style="font-size:9.1px;position:relative;top:0.2px">电参量统计报表</span></div>
<div class="a" style="left:228.75px;top:107.25px;width:391.25px;height:10.5px;background:#f0ffff;border:1px solid #b8c0c0"></div>
<div class="t" style="left:377px;top:110px;font-size:5.35px;color:#202020">报表日期：2022年07月06日23时51分</div>
<div class="a" style="left:228.75px;top:117.3px;width:63.75px;height:11.5px;background:#e0fcff;border:1px solid #b8c0c0"></div>
<div class="t" style="left:228.75px;width:62.75px;text-align:center;top:120px;font-size:7px;font-weight:bold;color:#202020">位置</div>
<div class="a" style="left:291.5px;top:117.3px;width:98.5px;height:11.5px;background:#e0fcff;border:1px solid #b8c0c0"></div>
<div class="t" style="left:291.5px;width:97.5px;text-align:center;top:120px;font-size:7px;font-weight:bold;color:#202020">名称</div>
<div class="a" style="left:389px;top:117.3px;width:24px;height:11.5px;background:#e0fcff;border:1px solid #b8c0c0"></div>
<div class="t" style="left:389px;width:23px;text-align:center;top:120.6px;font-size:5.2px;font-weight:bold;color:#202020;font-family:'Liberation Mono',monospace">Ua(V)</div>
<div class="a" style="left:412px;top:117.3px;width:25.5px;height:11.5px;background:#e0fcff;border:1px solid #b8c0c0"></div>
<div class="t" style="left:412px;width:24.5px;text-align:center;top:120.6px;font-size:5.2px;font-weight:bold;color:#202020;font-family:'Liberation Mono',monospace">Ub(V)</div>
<div class="a" style="left:436.5px;top:117.3px;width:24.0px;height:11.5px;background:#e0fcff;border:1px solid #b8c0c0"></div>
<div class="t" style="left:436.5px;width:23.0px;text-align:center;top:120.6px;font-size:5.2px;font-weight:bold;color:#202020;font-family:'Liberation Mono',monospace">Uc(V)</div>
<div class="a" style="left:459.5px;top:117.3px;width:24.0px;height:11.5px;background:#e0fcff;border:1px solid #b8c0c0"></div>
<div class="t" style="left:459.5px;width:23.0px;text-align:center;top:120.6px;font-size:5.2px;font-weight:bold;color:#202020;font-family:'Liberation Mono',monospace">Ia(A)</div>
<div class="a" style="left:482.5px;top:117.3px;width:24.0px;height:11.5px;background:#e0fcff;border:1px solid #b8c0c0"></div>
<div class="t" style="left:482.5px;width:23.0px;text-align:center;top:120.6px;font-size:5.2px;font-weight:bold;color:#202020;font-family:'Liberation Mono',monospace">Ib(A)</div>
<div class="a" style="left:505.5px;top:117.3px;width:24.0px;height:11.5px;background:#e0fcff;border:1px solid #b8c0c0"></div>
<div class="t" style="left:505.5px;width:23.0px;text-align:center;top:120.6px;font-size:5.2px;font-weight:bold;color:#202020;font-family:'Liberation Mono',monospace">Ic(A)</div>
<div class="a" style="left:528.5px;top:117.3px;width:25.0px;height:11.5px;background:#e0fcff;border:1px solid #b8c0c0"></div>
<div class="t" style="left:528.5px;width:24.0px;text-align:center;top:120.6px;font-size:5.2px;font-weight:bold;color:#202020;font-family:'Liberation Mono',monospace">P(KW)</div>
<div class="a" style="left:552.5px;top:117.3px;width:27.0px;height:11.5px;background:#e0fcff;border:1px solid #b8c0c0"></div>
<div class="t" style="left:552.5px;width:26.0px;text-align:center;top:120.6px;font-size:5.2px;font-weight:bold;color:#202020;font-family:'Liberation Mono',monospace">Q(KVA)</div>
<div class="a" style="left:578.5px;top:117.3px;width:18.5px;height:11.5px;background:#e0fcff;border:1px solid #b8c0c0"></div>
<div class="t" style="left:578.5px;width:17.5px;text-align:center;top:120.6px;font-size:5.2px;font-weight:bold;color:#202020;font-family:'Liberation Mono',monospace">COS</div>
<div class="a" style="left:596px;top:117.3px;width:24px;height:11.5px;background:#e0fcff;border:1px solid #b8c0c0"></div>
<div class="t" style="left:596px;width:23px;text-align:center;top:120.6px;font-size:5.2px;font-weight:bold;color:#202020;font-family:'Liberation Mono',monospace">F(Hz)</div>
<div class="a" style="left:228.75px;top:128.5px;width:63.75px;height:248.2px;background:#f0ffff;border-left:1px solid #b8c0c0;border-right:1px solid #b8c0c0"></div>
<div class="t" style="left:228.75px;width:62.75px;text-align:center;top:272px;font-size:6px;font-weight:bold;color:#202020;font-family:'Liberation Serif',serif">1#变</div>
<div class="a" style="left:291.5px;top:128.50px;width:328.5px;height:9.19px;background:#fffde0"></div>
<div class="t" style="left:291.5px;width:97.5px;text-align:center;top:130.80px;font-size:5px;color:#202020;-webkit-text-stroke:0.08px #202020">L1-1-1 进线柜</div>
<div class="t" style="left:389px;width:23px;text-align:center;top:130.70px;font-size:5.1px;color:#3434ea;-webkit-text-stroke:0.08px #3434ea">0.00</div>
<div class="t" style="left:412px;width:24.5px;text-align:center;top:130.70px;font-size:5.1px;color:#3434ea;-webkit-text-stroke:0.08px #3434ea">0.00</div>
<div class="t" style="left:436.5px;width:23.0px;text-align:center;top:130.70px;font-size:5.1px;color:#3434ea;-webkit-text-stroke:0.08px #3434ea">0.00</div>
<div class="t" style="left:459.5px;width:23.0px;text-align:center;top:130.70px;font-size:5.1px;color:#3434ea;-webkit-text-stroke:0.08px #3434ea">0.00</div>
<div class="t" style="left:482.5px;width:23.0px;text-align:center;top:130.70px;font-size:5.1px;color:#3434ea;-webkit-text-stroke:0.08px #3434ea">0.00</div>
<div class="t" style="left:505.5px;width:23.0px;text-align:center;top:130.70px;font-size:5.1px;color:#3434ea;-webkit-text-stroke:0.08px #3434ea">0.00</div>
<div class="t" style="left:528.5px;width:24.0px;text-align:center;top:130.70px;font-size:5.1px;color:#3434ea;-webkit-text-stroke:0.08px #3434ea">0.00</div>
<div class="t" style="left:552.5px;width:26.0px;text-align:center;top:130.70px;font-size:5.1px;color:#3434ea;-webkit-text-stroke:0.08px #3434ea">0.00</div>
<div class="t" style="left:578.5px;width:17.5px;text-align:center;top:130.70px;font-size:5.1px;color:#3434ea;-webkit-text-stroke:0.08px #3434ea">0.00</div>
<div class="t" style="left:596px;width:23px;text-align:center;top:130.70px;font-size:5.1px;color:#3434ea;-webkit-text-stroke:0.08px #3434ea">0.00</div>
<div class="a" style="left:291.5px;top:137.69px;width:328.5px;height:9.19px;background:#e4e4e4"></div>
<div class="t" style="left:291.5px;width:97.5px;text-align:center;top:139.99px;font-size:5px;color:#202020;-webkit-text-stroke:0.08px #202020">L1-2-1 电容柜1</div>
<div class="t" style="left:389px;width:23px;text-align:center;top:139.89px;font-size:5.1px;color:#3434ea;-webkit-text-stroke:0.08px #3434ea">0.00</div>
<div class="t" style="left:412px;width:24.5px;text-align:center;top:139.89px;font-size:5.1px;color:#3434ea;-webkit-text-stroke:0.08px #3434ea">0.00</div>
<div class="t" style="left:436.5px;width:23.0px;text-align:center;top:139.89px;font-size:5.1px;color:#3434ea;-webkit-text-stroke:0.08px #3434ea">0.00</div>
<div class="t" style="left:459.5px;width:23.0px;text-align:center;top:139.89px;font-size:5.1px;color:#3434ea;-webkit-text-stroke:0.08px #3434ea">0.00</div>
<div class="t" style="left:482.5px;width:23.0px;text-align:center;top:139.89px;font-size:5.1px;color:#3434ea;-webkit-text-stroke:0.08px #3434ea">0.00</div>
<div class="t" style="left:505.5px;width:23.0px;text-align:center;top:139.89px;font-size:5.1px;color:#3434ea;-webkit-text-stroke:0.08px #3434ea">0.00</div>
<div class="t" style="left:528.5px;width:24.0px;text-align:center;top:139.89px;font-size:5.1px;color:#3434ea;-webkit-text-stroke:0.08px #3434ea">0.00</div>
<div class="t" style="left:552.5px;width:26.0px;text-align:center;top:139.89px;font-size:5.1px;color:#3434ea;-webkit-text-stroke:0.08px #3434ea">0.00</div>
<div class="t" style="left:578.5px;width:17.5px;text-align:center;top:139.89px;font-size:5.1px;color:#3434ea;-webkit-text-stroke:0.08px #3434ea">0.00</div>
<div class="t" style="left:596px;width:23px;text-align:center;top:139.89px;font-size:5.1px;color:#3434ea;-webkit-text-stroke:0.08px #3434ea">0.00</div>
<div class="a" style="left:291.5px;top:146.87px;width:328.5px;height:9.19px;background:#fffde0"></div>
<div class="t" style="left:291.5px;width:97.5px;text-align:center;top:149.17px;font-size:5px;color:#202020;-webkit-text-stroke:0.08px #202020">L1-3-1 电容柜2</div>
<div class="t" style="left:389px;width:23px;text-align:center;top:149.07px;font-size:5.1px;color:#3434ea;-webkit-text-stroke:0.08px #3434ea">0.00</div>
<div class="t" style="left:412px;width:24.5px;text-align:center;top:149.07px;font-size:5.1px;color:#3434ea;-webkit-text-stroke:0.08px #3434ea">0.00</div>
<div class="t" style="left:436.5px;width:23.0px;text-align:center;top:149.07px;font-size:5.1px;color:#3434ea;-webkit-text-stroke:0.08px #3434ea">0.00</div>
<div class="t" style="left:459.5px;width:23.0px;text-align:center;top:149.07px;font-size:5.1px;color:#3434ea;-webkit-text-stroke:0.08px #3434ea">0.00</div>
<div class="t" style="left:482.5px;width:23.0px;text-align:center;top:149.07px;font-size:5.1px;color:#3434ea;-webkit-text-stroke:0.08px #3434ea">0.00</div>
<div class="t" style="left:505.5px;width:23.0px;text-align:center;top:149.07px;font-size:5.1px;color:#3434ea;-webkit-text-stroke:0.08px #3434ea">0.00</div>
<div class="t" style="left:528.5px;width:24.0px;text-align:center;top:149.07px;font-size:5.1px;color:#3434ea;-webkit-text-stroke:0.08px #3434ea">0.00</div>
<div class="t" style="left:552.5px;width:26.0px;text-align:center;top:149.07px;font-size:5.1px;color:#3434ea;-webkit-text-stroke:0.08px #3434ea">0.00</div>
<div class="t" style="left:578.5px;width:17.5px;text-align:center;top:149.07px;font-size:5.1px;color:#3434ea;-webkit-text-stroke:0.08px #3434ea">0.00</div>
<div class="t" style="left:596px;width:23px;text-align:center;top:149.07px;font-size:5.1px;color:#3434ea;-webkit-text-stroke:0.08px #3434ea">0.00</div>
<div class="a" style="left:291.5px;top:156.06px;width:328.5px;height:9.19px;background:#e4e4e4"></div>
<div class="t" style="left:291.5px;width:97.5px;text-align:center;top:158.36px;font-size:5px;color:#202020;-webkit-text-stroke:0.08px #202020">L1-4-1 冷冻机组B1LD1</div>
<div class="t" style="left:389px;width:23px;text-align:center;top:158.26px;font-size:5.1px;color:#3434ea;-webkit-text-stroke:0.08px #3434ea">0.00</div>
<div class="t" style="left:412px;width:24.5px;text-align:center;top:158.26px;font-size:5.1px;color:#3434ea;-webkit-text-stroke:0.08px #3434ea">0.00</div>
<div class="t" style="left:436.5px;width:23.0px;text-align:center;top:158.26px;font-size:5.1px;color:#3434ea;-webkit-text-stroke:0.08px #3434ea">0.00</div>
<div class="t" style="left:459.5px;width:23.0px;text-align:center;top:158.26px;font-size:5.1px;color:#3434ea;-webkit-text-stroke:0.08px #3434ea">0.00</div>
<div class="t" style="left:482.5px;width:23.0px;text-align:center;top:158.26px;font-size:5.1px;color:#3434ea;-webkit-text-stroke:0.08px #3434ea">0.00</div>
<div class="t" style="left:505.5px;width:23.0px;text-align:center;top:158.26px;font-size:5.1px;color:#3434ea;-webkit-text-stroke:0.08px #3434ea">0.00</div>
<div class="t" style="left:528.5px;width:24.0px;text-align:center;top:158.26px;font-size:5.1px;color:#3434ea;-webkit-text-stroke:0.08px #3434ea">0.00</div>
<div class="t" style="left:552.5px;width:26.0px;text-align:center;top:158.26px;font-size:5.1px;color:#3434ea;-webkit-text-stroke:0.08px #3434ea">0.00</div>
<div class="t" style="left:578.5px;width:17.5px;text-align:center;top:158.26px;font-size:5.1px;color:#3434ea;-webkit-text-stroke:0.08px #3434ea">0.00</div>
<div class="t" style="left:596px;width:23px;text-align:center;top:158.26px;font-size:5.1px;color:#3434ea;-webkit-text-stroke:0.08px #3434ea">0.00</div>
<div class="a" style="left:291.5px;top:165.24px;width:328.5px;height:9.19px;background:#fffde0"></div>
<div class="t" style="left:291.5px;width:97.5px;text-align:center;top:167.54px;font-size:5px;color:#202020;-webkit-text-stroke:0.08px #202020">L1-4-2 室外用电照明A-1EXL1</div>
<div class="t" style="left:389px;width:23px;text-align:center;top:167.44px;font-size:5.1px;color:#3434ea;-webkit-text-stroke:0.08px #3434ea">0.00</div>
<div class="t" style="left:412px;width:24.5px;text-align:center;top:167.44px;font-size:5.1px;color:#3434ea;-webkit-text-stroke:0.08px #3434ea">0.00</div>
<div class="t" style="left:436.5px;width:23.0px;text-align:center;top:167.44px;font-size:5.1px;color:#3434ea;-webkit-text-stroke:0.08px #3434ea">0.00</div>
<div class="t" style="left:459.5px;width:23.0px;text-align:center;top:167.44px;font-size:5.1px;color:#3434ea;-webkit-text-stroke:0.08px #3434ea">0.00</div>
<div class="t" style="left:482.5px;width:23.0px;text-align:center;top:167.44px;font-size:5.1px;color:#3434ea;-webkit-text-stroke:0.08px #3434ea">0.00</div>
<div class="t" style="left:505.5px;width:23.0px;text-align:center;top:167.44px;font-size:5.1px;color:#3434ea;-webkit-text-stroke:0.08px #3434ea">0.00</div>
<div class="t" style="left:528.5px;width:24.0px;text-align:center;top:167.44px;font-size:5.1px;color:#3434ea;-webkit-text-stroke:0.08px #3434ea">0.00</div>
<div class="t" style="left:552.5px;width:26.0px;text-align:center;top:167.44px;font-size:5.1px;color:#3434ea;-webkit-text-stroke:0.08px #3434ea">0.00</div>
<div class="t" style="left:578.5px;width:17.5px;text-align:center;top:167.44px;font-size:5.1px;color:#3434ea;-webkit-text-stroke:0.08px #3434ea">0.00</div>
<div class="t" style="left:596px;width:23px;text-align:center;top:167.44px;font-size:5.1px;color:#3434ea;-webkit-text-stroke:0.08px #3434ea">0.00</div>
<div class="a" style="left:291.5px;top:174.43px;width:328.5px;height:9.19px;background:#e4e4e4"></div>
<div class="t" style="left:291.5px;width:97.5px;text-align:center;top:176.73px;font-size:5px;color:#202020;-webkit-text-stroke:0.08px #202020">L1-4-3 室外用电照明A-1EXL2</div>
<div class="t" style="left:389px;width:23px;text-align:center;top:176.63px;font-size:5.1px;color:#3434ea;-webkit-text-stroke:0.08px #3434ea">0.00</div>
<div class="t" style="left:412px;width:24.5px;text-align:center;top:176.63px;font-size:5.1px;color:#3434ea;-webkit-text-stroke:0.08px #3434ea">0.00</div>
<div class="t" style="left:436.5px;width:23.0px;text-align:center;top:176.63px;font-size:5.1px;color:#3434ea;-webkit-text-stroke:0.08px #3434ea">0.00</div>
<div class="t" style="left:459.5px;width:23.0px;text-align:center;top:176.63px;font-size:5.1px;color:#3434ea;-webkit-text-stroke:0.08px #3434ea">0.00</div>
<div class="t" style="left:482.5px;width:23.0px;text-align:center;top:176.63px;font-size:5.1px;color:#3434ea;-webkit-text-stroke:0.08px #3434ea">0.00</div>
<div class="t" style="left:505.5px;width:23.0px;text-align:center;top:176.63px;font-size:5.1px;color:#3434ea;-webkit-text-stroke:0.08px #3434ea">0.00</div>
<div class="t" style="left:528.5px;width:24.0px;text-align:center;top:176.63px;font-size:5.1px;color:#3434ea;-webkit-text-stroke:0.08px #3434ea">0.00</div>
<div class="t" style="left:552.5px;width:26.0px;text-align:center;top:176.63px;font-size:5.1px;color:#3434ea;-webkit-text-stroke:0.08px #3434ea">0.00</div>
<div class="t" style="left:578.5px;width:17.5px;text-align:center;top:176.63px;font-size:5.1px;color:#3434ea;-webkit-text-stroke:0.08px #3434ea">0.00</div>
<div class="t" style="left:596px;width:23px;text-align:center;top:176.63px;font-size:5.1px;color:#3434ea;-webkit-text-stroke:0.08px #3434ea">0.00</div>
<div class="a" style="left:291.5px;top:183.61px;width:328.5px;height:9.19px;background:#fffde0"></div>
<div class="t" style="left:291.5px;width:97.5px;text-align:center;top:185.91px;font-size:5px;color:#202020;-webkit-text-stroke:0.08px #202020">L1-4-4 备用</div>
<div class="t" style="left:389px;width:23px;text-align:center;top:185.81px;font-size:5.1px;color:#3434ea;-webkit-text-stroke:0.08px #3434ea">0.00</div>
<div class="t" style="left:412px;width:24.5px;text-align:center;top:185.81px;font-size:5.1px;color:#3434ea;-webkit-text-stroke:0.08px #3434ea">0.00</div>
<div class="t" style="left:436.5px;width:23.0px;text-align:center;top:185.81px;font-size:5.1px;color:#3434ea;-webkit-text-stroke:0.08px #3434ea">0.00</div>
<div class="t" style="left:459.5px;width:23.0px;text-align:center;top:185.81px;font-size:5.1px;color:#3434ea;-webkit-text-stroke:0.08px #3434ea">0.00</div>
<div class="t" style="left:482.5px;width:23.0px;text-align:center;top:185.81px;font-size:5.1px;color:#3434ea;-webkit-text-stroke:0.08px #3434ea">0.00</div>
<div class="t" style="left:505.5px;width:23.0px;text-align:center;top:185.81px;font-size:5.1px;color:#3434ea;-webkit-text-stroke:0.08px #3434ea">0.00</div>
<div class="t" style="left:528.5px;width:24.0px;text-align:center;top:185.81px;font-size:5.1px;color:#3434ea;-webkit-text-stroke:0.08px #3434ea">0.00</div>
<div class="t" style="left:552.5px;width:26.0px;text-align:center;top:185.81px;font-size:5.1px;color:#3434ea;-webkit-text-stroke:0.08px #3434ea">0.00</div>
<div class="t" style="left:578.5px;width:17.5px;text-align:center;top:185.81px;font-size:5.1px;color:#3434ea;-webkit-text-stroke:0.08px #3434ea">0.00</div>
<div class="t" style="left:596px;width:23px;text-align:center;top:185.81px;font-size:5.1px;color:#3434ea;-webkit-text-stroke:0.08px #3434ea">0.00</div>
<div class="a" style="left:291.5px;top:192.80px;width:328.5px;height:9.19px;background:#e4e4e4"></div>
<div class="t" style="left:291.5px;width:97.5px;text-align:center;top:195.10px;font-size:5px;color:#202020;-webkit-text-stroke:0.08px #202020">L1-4-5 备用</div>
<div class="t" style="left:389px;width:23px;text-align:center;top:195.00px;font-size:5.1px;color:#3434ea;-webkit-text-stroke:0.08px #3434ea">0.00</div>
<div class="t" style="left:412px;width:24.5px;text-align:center;top:195.00px;font-size:5.1px;color:#3434ea;-webkit-text-stroke:0.08px #3434ea">0.00</div>
<div class="t" style="left:436.5px;width:23.0px;text-align:center;top:195.00px;font-size:5.1px;color:#3434ea;-webkit-text-stroke:0.08px #3434ea">0.00</div>
<div class="t" style="left:459.5px;width:23.0px;text-align:center;top:195.00px;font-size:5.1px;color:#3434ea;-webkit-text-stroke:0.08px #3434ea">0.00</div>
<div class="t" style="left:482.5px;width:23.0px;text-align:center;top:195.00px;font-size:5.1px;color:#3434ea;-webkit-text-stroke:0.08px #3434ea">0.00</div>
<div class="t" style="left:505.5px;width:23.0px;text-align:center;top:195.00px;font-size:5.1px;color:#3434ea;-webkit-text-stroke:0.08px #3434ea">0.00</div>
<div class="t" style="left:528.5px;width:24.0px;text-align:center;top:195.00px;font-size:5.1px;color:#3434ea;-webkit-text-stroke:0.08px #3434ea">0.00</div>
<div class="t" style="left:552.5px;width:26.0px;text-align:center;top:195.00px;font-size:5.1px;color:#3434ea;-webkit-text-stroke:0.08px #3434ea">0.00</div>
<div class="t" style="left:578.5px;width:17.5px;text-align:center;top:195.00px;font-size:5.1px;color:#3434ea;-webkit-text-stroke:0.08px #3434ea">0.00</div>
<div class="t" style="left:596px;width:23px;text-align:center;top:195.00px;font-size:5.1px;color:#3434ea;-webkit-text-stroke:0.08px #3434ea">0.00</div>
<div class="a" style="left:291.5px;top:201.98px;width:328.5px;height:9.19px;background:#fffde0"></div>
<div class="t" style="left:291.5px;width:97.5px;text-align:center;top:204.28px;font-size:5px;color:#202020;-webkit-text-stroke:0.08px #202020">L1-5-1 冷冻机组B1LD2</div>
<div class="t" style="left:389px;width:23px;text-align:center;top:204.18px;font-size:5.1px;color:#3434ea;-webkit-text-stroke:0.08px #3434ea">0.00</div>
<div class="t" style="left:412px;width:24.5px;text-align:center;top:204.18px;font-size:5.1px;color:#3434ea;-webkit-text-stroke:0.08px #3434ea">0.00</div>
<div class="t" style="left:436.5px;width:23.0px;text-align:center;top:204.18px;font-size:5.1px;color:#3434ea;-webkit-text-stroke:0.08px #3434ea">0.00</div>
<div class="t" style="left:459.5px;width:23.0px;text-align:center;top:204.18px;font-size:5.1px;color:#3434ea;-webkit-text-stroke:0.08px #3434ea">0.00</div>
<div class="t" style="left:482.5px;width:23.0px;text-align:center;top:204.18px;font-size:5.1px;color:#3434ea;-webkit-text-stroke:0.08px #3434ea">0.00</div>
<div class="t" style="left:505.5px;width:23.0px;text-align:center;top:204.18px;font-size:5.1px;color:#3434ea;-webkit-text-stroke:0.08px #3434ea">0.00</div>
<div class="t" style="left:528.5px;width:24.0px;text-align:center;top:204.18px;font-size:5.1px;color:#3434ea;-webkit-text-stroke:0.08px #3434ea">0.00</div>
<div class="t" style="left:552.5px;width:26.0px;text-align:center;top:204.18px;font-size:5.1px;color:#3434ea;-webkit-text-stroke:0.08px #3434ea">0.00</div>
<div class="t" style="left:578.5px;width:17.5px;text-align:center;top:204.18px;font-size:5.1px;color:#3434ea;-webkit-text-stroke:0.08px #3434ea">0.00</div>
<div class="t" style="left:596px;width:23px;text-align:center;top:204.18px;font-size:5.1px;color:#3434ea;-webkit-text-stroke:0.08px #3434ea">0.00</div>
<div class="a" style="left:291.5px;top:211.17px;width:328.5px;height:9.19px;background:#e4e4e4"></div>
<div class="t" style="left:291.5px;width:97.5px;text-align:center;top:213.47px;font-size:5px;color:#202020;-webkit-text-stroke:0.08px #202020">L1-5-2 室外用电照明A-1EXL3</div>
<div class="t" style="left:389px;width:23px;text-align:center;top:213.37px;font-size:5.1px;color:#3434ea;-webkit-text-stroke:0.08px #3434ea">0.00</div>
<div class="t" style="left:412px;width:24.5px;text-align:center;top:213.37px;font-size:5.1px;color:#3434ea;-webkit-text-stroke:0.08px #3434ea">0.00</div>
<div class="t" style="left:436.5px;width:23.0px;text-align:center;top:213.37px;font-size:5.1px;color:#3434ea;-webkit-text-stroke:0.08px #3434ea">0.00</div>
<div class="t" style="left:459.5px;width:23.0px;text-align:center;top:213.37px;font-size:5.1px;color:#3434ea;-webkit-text-stroke:0.08px #3434ea">0.00</div>
<div class="t" style="left:482.5px;width:23.0px;text-align:center;top:213.37px;font-size:5.1px;color:#3434ea;-webkit-text-stroke:0.08px #3434ea">0.00</div>
<div class="t" style="left:505.5px;width:23.0px;text-align:center;top:213.37px;font-size:5.1px;color:#3434ea;-webkit-text-stroke:0.08px #3434ea">0.00</div>
<div class="t" style="left:528.5px;width:24.0px;text-align:center;top:213.37px;font-size:5.1px;color:#3434ea;-webkit-text-stroke:0.08px #3434ea">0.00</div>
<div class="t" style="left:552.5px;width:26.0px;text-align:center;top:213.37px;font-size:5.1px;color:#3434ea;-webkit-text-stroke:0.08px #3434ea">0.00</div>
<div class="t" style="left:578.5px;width:17.5px;text-align:center;top:213.37px;font-size:5.1px;color:#3434ea;-webkit-text-stroke:0.08px #3434ea">0.00</div>
<div class="t" style="left:596px;width:23px;text-align:center;top:213.37px;font-size:5.1px;color:#3434ea;-webkit-text-stroke:0.08px #3434ea">0.00</div>
<div class="a" style="left:291.5px;top:220.35px;width:328.5px;height:9.19px;background:#fffde0"></div>
<div class="t" style="left:291.5px;width:97.5px;text-align:center;top:222.65px;font-size:5px;color:#202020;-webkit-text-stroke:0.08px #202020">L1-5-3 备用</div>
<div class="t" style="left:389px;width:23px;text-align:center;top:222.55px;font-size:5.1px;color:#3434ea;-webkit-text-stroke:0.08px #3434ea">0.00</div>
<div class="t" style="left:412px;width:24.5px;text-align:center;top:222.55px;font-size:5.1px;color:#3434ea;-webkit-text-stroke:0.08px #3434ea">0.00</div>
<div class="t" style="left:436.5px;width:23.0px;text-align:center;top:222.55px;font-size:5.1px;color:#3434ea;-webkit-text-stroke:0.08px #3434ea">0.00</div>
<div class="t" style="left:459.5px;width:23.0px;text-align:center;top:222.55px;font-size:5.1px;color:#3434ea;-webkit-text-stroke:0.08px #3434ea">0.00</div>
<div class="t" style="left:482.5px;width:23.0px;text-align:center;top:222.55px;font-size:5.1px;color:#3434ea;-webkit-text-stroke:0.08px #3434ea">0.00</div>
<div class="t" style="left:505.5px;width:23.0px;text-align:center;top:222.55px;font-size:5.1px;color:#3434ea;-webkit-text-stroke:0.08px #3434ea">0.00</div>
<div class="t" style="left:528.5px;width:24.0px;text-align:center;top:222.55px;font-size:5.1px;color:#3434ea;-webkit-text-stroke:0.08px #3434ea">0.00</div>
<div class="t" style="left:552.5px;width:26.0px;text-align:center;top:222.55px;font-size:5.1px;color:#3434ea;-webkit-text-stroke:0.08px #3434ea">0.00</div>
<div class="t" style="left:578.5px;width:17.5px;text-align:center;top:222.55px;font-size:5.1px;color:#3434ea;-webkit-text-stroke:0.08px #3434ea">0.00</div>
<div class="t" style="left:596px;width:23px;text-align:center;top:222.55px;font-size:5.1px;color:#3434ea;-webkit-text-stroke:0.08px #3434ea">0.00</div>
<div class="a" style="left:291.5px;top:229.54px;width:328.5px;height:9.19px;background:#e4e4e4"></div>
<div class="t" style="left:291.5px;width:97.5px;text-align:center;top:231.84px;font-size:5px;color:#202020;-webkit-text-stroke:0.08px #202020">L1-5-4 备用</div>
<div class="t" style="left:389px;width:23px;text-align:center;top:231.74px;font-size:5.1px;color:#3434ea;-webkit-text-stroke:0.08px #3434ea">0.00</div>
<div class="t" style="left:412px;width:24.5px;text-align:center;top:231.74px;font-size:5.1px;color:#3434ea;-webkit-text-stroke:0.08px #3434ea">0.00</div>
<div class="t" style="left:436.5px;width:23.0px;text-align:center;top:231.74px;font-size:5.1px;color:#3434ea;-webkit-text-stroke:0.08px #3434ea">0.00</div>
<div class="t" style="left:459.5px;width:23.0px;text-align:center;top:231.74px;font-size:5.1px;color:#3434ea;-webkit-text-stroke:0.08px #3434ea">0.00</div>
<div class="t" style="left:482.5px;width:23.0px;text-align:center;top:231.74px;font-size:5.1px;color:#3434ea;-webkit-text-stroke:0.08px #3434ea">0.00</div>
<div class="t" style="left:505.5px;width:23.0px;text-align:center;top:231.74px;font-size:5.1px;color:#3434ea;-webkit-text-stroke:0.08px #3434ea">0.00</div>
<div class="t" style="left:528.5px;width:24.0px;text-align:center;top:231.74px;font-size:5.1px;color:#3434ea;-webkit-text-stroke:0.08px #3434ea">0.00</div>
<div class="t" style="left:552.5px;width:26.0px;text-align:center;top:231.74px;font-size:5.1px;color:#3434ea;-webkit-text-stroke:0.08px #3434ea">0.00</div>
<div class="t" style="left:578.5px;width:17.5px;text-align:center;top:231.74px;font-size:5.1px;color:#3434ea;-webkit-text-stroke:0.08px #3434ea">0.00</div>
<div class="t" style="left:596px;width:23px;text-align:center;top:231.74px;font-size:5.1px;color:#3434ea;-webkit-text-stroke:0.08px #3434ea">0.00</div>
<div class="a" style="left:291.5px;top:238.72px;width:328.5px;height:9.19px;background:#fffde0"></div>
<div class="t" style="left:291.5px;width:97.5px;text-align:center;top:241.02px;font-size:5px;color:#202020;-webkit-text-stroke:0.08px #202020">L1-5-5 备用</div>
<div class="t" style="left:389px;width:23px;text-align:center;top:240.92px;font-size:5.1px;color:#3434ea;-webkit-text-stroke:0.08px #3434ea">0.00</div>
<div class="t" style="left:412px;width:24.5px;text-align:center;top:240.92px;font-size:5.1px;color:#3434ea;-webkit-text-stroke:0.08px #3434ea">0.00</div>
<div class="t" style="left:436.5px;width:23.0px;text-align:center;top:240.92px;font-size:5.1px;color:#3434ea;-webkit-text-stroke:0.08px #3434ea">0.00</div>
<div class="t" style="left:459.5px;width:23.0px;text-align:center;top:240.92px;font-size:5.1px;color:#3434ea;-webkit-text-stroke:0.08px #3434ea">0.00</div>
<div class="t" style="left:482.5px;width:23.0px;text-align:center;top:240.92px;font-size:5.1px;color:#3434ea;-webkit-text-stroke:0.08px #3434ea">0.00</div>
<div class="t" style="left:505.5px;width:23.0px;text-align:center;top:240.92px;font-size:5.1px;color:#3434ea;-webkit-text-stroke:0.08px #3434ea">0.00</div>
<div class="t" style="left:528.5px;width:24.0px;text-align:center;top:240.92px;font-size:5.1px;color:#3434ea;-webkit-text-stroke:0.08px #3434ea">0.00</div>
<div class="t" style="left:552.5px;width:26.0px;text-align:center;top:240.92px;font-size:5.1px;color:#3434ea;-webkit-text-stroke:0.08px #3434ea">0.00</div>
<div class="t" style="left:578.5px;width:17.5px;text-align:center;top:240.92px;font-size:5.1px;color:#3434ea;-webkit-text-stroke:0.08px #3434ea">0.00</div>
<div class="t" style="left:596px;width:23px;text-align:center;top:240.92px;font-size:5.1px;color:#3434ea;-webkit-text-stroke:0.08px #3434ea">0.00</div>
<div class="a" style="left:291.5px;top:247.91px;width:328.5px;height:9.19px;background:#e4e4e4"></div>
<div class="t" style="left:291.5px;width:97.5px;text-align:center;top:250.21px;font-size:5px;color:#202020;-webkit-text-stroke:0.08px #202020">L1-6-1 冷冻机组B1LD3</div>
<div class="t" style="left:389px;width:23px;text-align:center;top:250.11px;font-size:5.1px;color:#3434ea;-webkit-text-stroke:0.08px #3434ea">0.00</div>
<div class="t" style="left:412px;width:24.5px;text-align:center;top:250.11px;font-size:5.1px;color:#3434ea;-webkit-text-stroke:0.08px #3434ea">0.00</div>
<div class="t" style="left:436.5px;width:23.0px;text-align:center;top:250.11px;font-size:5.1px;color:#3434ea;-webkit-text-stroke:0.08px #3434ea">0.00</div>
<div class="t" style="left:459.5px;width:23.0px;text-align:center;top:250.11px;font-size:5.1px;color:#3434ea;-webkit-text-stroke:0.08px #3434ea">0.00</div>
<div class="t" style="left:482.5px;width:23.0px;text-align:center;top:250.11px;font-size:5.1px;color:#3434ea;-webkit-text-stroke:0.08px #3434ea">0.00</div>
<div class="t" style="left:505.5px;width:23.0px;text-align:center;top:250.11px;font-size:5.1px;color:#3434ea;-webkit-text-stroke:0.08px #3434ea">0.00</div>
<div class="t" style="left:528.5px;width:24.0px;text-align:center;top:250.11px;font-size:5.1px;color:#3434ea;-webkit-text-stroke:0.08px #3434ea">0.00</div>
<div class="t" style="left:552.5px;width:26.0px;text-align:center;top:250.11px;font-size:5.1px;color:#3434ea;-webkit-text-stroke:0.08px #3434ea">0.00</div>
<div class="t" style="left:578.5px;width:17.5px;text-align:center;top:250.11px;font-size:5.1px;color:#3434ea;-webkit-text-stroke:0.08px #3434ea">0.00</div>
<div class="t" style="left:596px;width:23px;text-align:center;top:250.11px;font-size:5.1px;color:#3434ea;-webkit-text-stroke:0.08px #3434ea">0.00</div>
<div class="a" style="left:291.5px;top:257.09px;width:328.5px;height:9.19px;background:#fffde0"></div>
<div class="t" style="left:291.5px;width:97.5px;text-align:center;top:259.39px;font-size:5px;color:#202020;-webkit-text-stroke:0.08px #202020">L1-6-2 备用</div>
<div class="t" style="left:389px;width:23px;text-align:center;top:259.29px;font-size:5.1px;color:#3434ea;-webkit-text-stroke:0.08px #3434ea">0.00</div>
<div class="t" style="left:412px;width:24.5px;text-align:center;top:259.29px;font-size:5.1px;color:#3434ea;-webkit-text-stroke:0.08px #3434ea">0.00</div>
<div class="t" style="left:436.5px;width:23.0px;text-align:center;top:259.29px;font-size:5.1px;color:#3434ea;-webkit-text-stroke:0.08px #3434ea">0.00</div>
<div class="t" style="left:459.5px;width:23.0px;text-align:center;top:259.29px;font-size:5.1px;color:#3434ea;-webkit-text-stroke:0.08px #3434ea">0.00</div>
<div class="t" style="left:482.5px;width:23.0px;text-align:center;top:259.29px;font-size:5.1px;color:#3434ea;-webkit-text-stroke:0.08px #3434ea">0.00</div>
<div class="t" style="left:505.5px;width:23.0px;text-align:center;top:259.29px;font-size:5.1px;color:#3434ea;-webkit-text-stroke:0.08px #3434ea">0.00</div>
<div class="t" style="left:528.5px;width:24.0px;text-align:center;top:259.29px;font-size:5.1px;color:#3434ea;-webkit-text-stroke:0.08px #3434ea">0.00</div>
<div class="t" style="left:552.5px;width:26.0px;text-align:center;top:259.29px;font-size:5.1px;color:#3434ea;-webkit-text-stroke:0.08px #3434ea">0.00</div>
<div class="t" style="left:578.5px;width:17.5px;text-align:center;top:259.29px;font-size:5.1px;color:#3434ea;-webkit-text-stroke:0.08px #3434ea">0.00</div>
<div class="t" style="left:596px;width:23px;text-align:center;top:259.29px;font-size:5.1px;color:#3434ea;-webkit-text-stroke:0.08px #3434ea">0.00</div>
<div class="a" style="left:291.5px;top:266.28px;width:328.5px;height:9.19px;background:#e4e4e4"></div>
<div class="t" style="left:291.5px;width:97.5px;text-align:center;top:268.58px;font-size:5px;color:#202020;-webkit-text-stroke:0.08px #202020">L1-6-3 备用</div>
<div class="t" style="left:389px;width:23px;text-align:center;top:268.48px;font-size:5.1px;color:#3434ea;-webkit-text-stroke:0.08px #3434ea">0.00</div>
<div class="t" style="left:412px;width:24.5px;text-align:center;top:268.48px;font-size:5.1px;color:#3434ea;-webkit-text-stroke:0.08px #3434ea">0.00</div>
<div class="t" style="left:436.5px;width:23.0px;text-align:center;top:268.48px;font-size:5.1px;color:#3434ea;-webkit-text-stroke:0.08px #3434ea">0.00</div>
<div class="t" style="left:459.5px;width:23.0px;text-align:center;top:268.48px;font-size:5.1px;color:#3434ea;-webkit-text-stroke:0.08px #3434ea">0.00</div>
<div class="t" style="left:482.5px;width:23.0px;text-align:center;top:268.48px;font-size:5.1px;color:#3434ea;-webkit-text-stroke:0.08px #3434ea">0.00</div>
<div class="t" style="left:505.5px;width:23.0px;text-align:center;top:268.48px;font-size:5.1px;color:#3434ea;-webkit-text-stroke:0.08px #3434ea">0.00</div>
<div class="t" style="left:528.5px;width:24.0px;text-align:center;top:268.48px;font-size:5.1px;color:#3434ea;-webkit-text-stroke:0.08px #3434ea">0.00</div>
<div class="t" style="left:552.5px;width:26.0px;text-align:center;top:268.48px;font-size:5.1px;color:#3434ea;-webkit-text-stroke:0.08px #3434ea">0.00</div>
<div class="t" style="left:578.5px;width:17.5px;text-align:center;top:268.48px;font-size:5.1px;color:#3434ea;-webkit-text-stroke:0.08px #3434ea">0.00</div>
<div class="t" style="left:596px;width:23px;text-align:center;top:268.48px;font-size:5.1px;color:#3434ea;-webkit-text-stroke:0.08px #3434ea">0.00</div>
<div class="a" style="left:291.5px;top:275.46px;width:328.5px;height:9.19px;background:#fffde0"></div>
<div class="t" style="left:291.5px;width:97.5px;text-align:center;top:277.76px;font-size:5px;color:#202020;-webkit-text-stroke:0.08px #202020">L1-6-4 备用</div>
<div class="t" style="left:389px;width:23px;text-align:center;top:277.66px;font-size:5.1px;color:#3434ea;-webkit-text-stroke:0.08px #3434ea">0.00</div>
<div class="t" style="left:412px;width:24.5px;text-align:center;top:277.66px;font-size:5.1px;color:#3434ea;-webkit-text-stroke:0.08px #3434ea">0.00</div>
<div class="t" style="left:436.5px;width:23.0px;text-align:center;top:277.66px;font-size:5.1px;color:#3434ea;-webkit-text-stroke:0.08px #3434ea">0.00</div>
<div class="t" style="left:459.5px;width:23.0px;text-align:center;top:277.66px;font-size:5.1px;color:#3434ea;-webkit-text-stroke:0.08px #3434ea">0.00</div>
<div class="t" style="left:482.5px;width:23.0px;text-align:center;top:277.66px;font-size:5.1px;color:#3434ea;-webkit-text-stroke:0.08px #3434ea">0.00</div>
<div class="t" style="left:505.5px;width:23.0px;text-align:center;top:277.66px;font-size:5.1px;color:#3434ea;-webkit-text-stroke:0.08px #3434ea">0.00</div>
<div class="t" style="left:528.5px;width:24.0px;text-align:center;top:277.66px;font-size:5.1px;color:#3434ea;-webkit-text-stroke:0.08px #3434ea">0.00</div>
<div class="t" style="left:552.5px;width:26.0px;text-align:center;top:277.66px;font-size:5.1px;color:#3434ea;-webkit-text-stroke:0.08px #3434ea">0.00</div>
<div class="t" style="left:578.5px;width:17.5px;text-align:center;top:277.66px;font-size:5.1px;color:#3434ea;-webkit-text-stroke:0.08px #3434ea">0.00</div>
<div class="t" style="left:596px;width:23px;text-align:center;top:277.66px;font-size:5.1px;color:#3434ea;-webkit-text-stroke:0.08px #3434ea">0.00</div>
<div class="a" style="left:291.5px;top:284.65px;width:328.5px;height:9.19px;background:#e4e4e4"></div>
<div class="t" style="left:291.5px;width:97.5px;text-align:center;top:286.95px;font-size:5px;color:#202020;-webkit-text-stroke:0.08px #202020">L1-6-5 备用</div>
<div class="t" style="left:389px;width:23px;text-align:center;top:286.85px;font-size:5.1px;color:#3434ea;-webkit-text-stroke:0.08px #3434ea">0.00</div>
<div class="t" style="left:412px;width:24.5px;text-align:center;top:286.85px;font-size:5.1px;color:#3434ea;-webkit-text-stroke:0.08px #3434ea">0.00</div>
<div class="t" style="left:436.5px;width:23.0px;text-align:center;top:286.85px;font-size:5.1px;color:#3434ea;-webkit-text-stroke:0.08px #3434ea">0.00</div>
<div class="t" style="left:459.5px;width:23.0px;text-align:center;top:286.85px;font-size:5.1px;color:#3434ea;-webkit-text-stroke:0.08px #3434ea">0.00</div>
<div class="t" style="left:482.5px;width:23.0px;text-align:center;top:286.85px;font-size:5.1px;color:#3434ea;-webkit-text-stroke:0.08px #3434ea">0.00</div>
<div class="t" style="left:505.5px;width:23.0px;text-align:center;top:286.85px;font-size:5.1px;color:#3434ea;-webkit-text-stroke:0.08px #3434ea">0.00</div>
<div class="t" style="left:528.5px;width:24.0px;text-align:center;top:286.85px;font-size:5.1px;color:#3434ea;-webkit-text-stroke:0.08px #3434ea">0.00</div>
<div class="t" style="left:552.5px;width:26.0px;text-align:center;top:286.85px;font-size:5.1px;color:#3434ea;-webkit-text-stroke:0.08px #3434ea">0.00</div>
<div class="t" style="left:578.5px;width:17.5px;text-align:center;top:286.85px;font-size:5.1px;color:#3434ea;-webkit-text-stroke:0.08px #3434ea">0.00</div>
<div class="t" style="left:596px;width:23px;text-align:center;top:286.85px;font-size:5.1px;color:#3434ea;-webkit-text-stroke:0.08px #3434ea">0.00</div>
<div class="a" style="left:291.5px;top:293.83px;width:328.5px;height:9.19px;background:#fffde0"></div>
<div class="t" style="left:291.5px;width:97.5px;text-align:center;top:296.13px;font-size:5px;color:#202020;-webkit-text-stroke:0.08px #202020">L1-7-1 备用</div>
<div class="t" style="left:389px;width:23px;text-align:center;top:296.03px;font-size:5.1px;color:#3434ea;-webkit-text-stroke:0.08px #3434ea">0.00</div>
<div class="t" style="left:412px;width:24.5px;text-align:center;top:296.03px;font-size:5.1px;color:#3434ea;-webkit-text-stroke:0.08px #3434ea">0.00</div>
<div class="t" style="left:436.5px;width:23.0px;text-align:center;top:296.03px;font-size:5.1px;color:#3434ea;-webkit-text-stroke:0.08px #3434ea">0.00</div>
<div class="t" style="left:459.5px;width:23.0px;text-align:center;top:296.03px;font-size:5.1px;color:#3434ea;-webkit-text-stroke:0.08px #3434ea">0.00</div>
<div class="t" style="left:482.5px;width:23.0px;text-align:center;top:296.03px;font-size:5.1px;color:#3434ea;-webkit-text-stroke:0.08px #3434ea">0.00</div>
<div class="t" style="left:505.5px;width:23.0px;text-align:center;top:296.03px;font-size:5.1px;color:#3434ea;-webkit-text-stroke:0.08px #3434ea">0.00</div>
<div class="t" style="left:528.5px;width:24.0px;text-align:center;top:296.03px;font-size:5.1px;color:#3434ea;-webkit-text-stroke:0.08px #3434ea">0.00</div>
<div class="t" style="left:552.5px;width:26.0px;text-align:center;top:296.03px;font-size:5.1px;color:#3434ea;-webkit-text-stroke:0.08px #3434ea">0.00</div>
<div class="t" style="left:578.5px;width:17.5px;text-align:center;top:296.03px;font-size:5.1px;color:#3434ea;-webkit-text-stroke:0.08px #3434ea">0.00</div>
<div class="t" style="left:596px;width:23px;text-align:center;top:296.03px;font-size:5.1px;color:#3434ea;-webkit-text-stroke:0.08px #3434ea">0.00</div>
<div class="a" style="left:291.5px;top:303.02px;width:328.5px;height:9.19px;background:#e4e4e4"></div>
<div class="t" style="left:291.5px;width:97.5px;text-align:center;top:305.32px;font-size:5px;color:#202020;-webkit-text-stroke:0.08px #202020">L1-7-2 备用</div>
<div class="t" style="left:389px;width:23px;text-align:center;top:305.22px;font-size:5.1px;color:#3434ea;-webkit-text-stroke:0.08px #3434ea">0.00</div>
<div class="t" style="left:412px;width:24.5px;text-align:center;top:305.22px;font-size:5.1px;color:#3434ea;-webkit-text-stroke:0.08px #3434ea">0.00</div>
<div class="t" style="left:436.5px;width:23.0px;text-align:center;top:305.22px;font-size:5.1px;color:#3434ea;-webkit-text-stroke:0.08px #3434ea">0.00</div>
<div class="t" style="left:459.5px;width:23.0px;text-align:center;top:305.22px;font-size:5.1px;color:#3434ea;-webkit-text-stroke:0.08px #3434ea">0.00</div>
<div class="t" style="left:482.5px;width:23.0px;text-align:center;top:305.22px;font-size:5.1px;color:#3434ea;-webkit-text-stroke:0.08px #3434ea">0.00</div>
<div class="t" style="left:505.5px;width:23.0px;text-align:center;top:305.22px;font-size:5.1px;color:#3434ea;-webkit-text-stroke:0.08px #3434ea">0.00</div>
<div class="t" style="left:528.5px;width:24.0px;text-align:center;top:305.22px;font-size:5.1px;color:#3434ea;-webkit-text-stroke:0.08px #3434ea">0.00</div>
<div class="t" style="left:552.5px;width:26.0px;text-align:center;top:305.22px;font-size:5.1px;color:#3434ea;-webkit-text-stroke:0.08px #3434ea">0.00</div>
<div class="t" style="left:578.5px;width:17.5px;text-align:center;top:305.22px;font-size:5.1px;color:#3434ea;-webkit-text-stroke:0.08px #3434ea">0.00</div>
<div class="t" style="left:596px;width:23px;text-align:center;top:305.22px;font-size:5.1px;color:#3434ea;-webkit-text-stroke:0.08px #3434ea">0.00</div>
<div class="a" style="left:291.5px;top:312.20px;width:328.5px;height:9.19px;background:#fffde0"></div>
<div class="t" style="left:291.5px;width:97.5px;text-align:center;top:314.50px;font-size:5px;color:#202020;-webkit-text-stroke:0.08px #202020">L1-7-3 备用</div>
<div class="t" style="left:389px;width:23px;text-align:center;top:314.40px;font-size:5.1px;color:#3434ea;-webkit-text-stroke:0.08px #3434ea">0.00</div>
<div class="t" style="left:412px;width:24.5px;text-align:center;top:314.40px;font-size:5.1px;color:#3434ea;-webkit-text-stroke:0.08px #3434ea">0.00</div>
<div class="t" style="left:436.5px;width:23.0px;text-align:center;top:314.40px;font-size:5.1px;color:#3434ea;-webkit-text-stroke:0.08px #3434ea">0.00</div>
<div class="t" style="left:459.5px;width:23.0px;text-align:center;top:314.40px;font-size:5.1px;color:#3434ea;-webkit-text-stroke:0.08px #3434ea">0.00</div>
<div class="t" style="left:482.5px;width:23.0px;text-align:center;top:314.40px;font-size:5.1px;color:#3434ea;-webkit-text-stroke:0.08px #3434ea">0.00</div>
<div class="t" style="left:505.5px;width:23.0px;text-align:center;top:314.40px;font-size:5.1px;color:#3434ea;-webkit-text-stroke:0.08px #3434ea">0.00</div>
<div class="t" style="left:528.5px;width:24.0px;text-align:center;top:314.40px;font-size:5.1px;color:#3434ea;-webkit-text-stroke:0.08px #3434ea">0.00</div>
<div class="t" style="left:552.5px;width:26.0px;text-align:center;top:314.40px;font-size:5.1px;color:#3434ea;-webkit-text-stroke:0.08px #3434ea">0.00</div>
<div class="t" style="left:578.5px;width:17.5px;text-align:center;top:314.40px;font-size:5.1px;color:#3434ea;-webkit-text-stroke:0.08px #3434ea">0.00</div>
<div class="t" style="left:596px;width:23px;text-align:center;top:314.40px;font-size:5.1px;color:#3434ea;-webkit-text-stroke:0.08px #3434ea">0.00</div>
<div class="a" style="left:291.5px;top:321.39px;width:328.5px;height:9.19px;background:#e4e4e4"></div>
<div class="t" style="left:291.5px;width:97.5px;text-align:center;top:323.69px;font-size:5px;color:#202020;-webkit-text-stroke:0.08px #202020">L1-7-4 备用</div>
<div class="t" style="left:389px;width:23px;text-align:center;top:323.59px;font-size:5.1px;color:#3434ea;-webkit-text-stroke:0.08px #3434ea">0.00</div>
<div class="t" style="left:412px;width:24.5px;text-align:center;top:323.59px;font-size:5.1px;color:#3434ea;-webkit-text-stroke:0.08px #3434ea">0.00</div>
<div class="t" style="left:436.5px;width:23.0px;text-align:center;top:323.59px;font-size:5.1px;color:#3434ea;-webkit-text-stroke:0.08px #3434ea">0.00</div>
<div class="t" style="left:459.5px;width:23.0px;text-align:center;top:323.59px;font-size:5.1px;color:#3434ea;-webkit-text-stroke:0.08px #3434ea">0.00</div>
<div class="t" style="left:482.5px;width:23.0px;text-align:center;top:323.59px;font-size:5.1px;color:#3434ea;-webkit-text-stroke:0.08px #3434ea">0.00</div>
<div class="t" style="left:505.5px;width:23.0px;text-align:center;top:323.59px;font-size:5.1px;color:#3434ea;-webkit-text-stroke:0.08px #3434ea">0.00</div>
<div class="t" style="left:528.5px;width:24.0px;text-align:center;top:323.59px;font-size:5.1px;color:#3434ea;-webkit-text-stroke:0.08px #3434ea">0.00</div>
<div class="t" style="left:552.5px;width:26.0px;text-align:center;top:323.59px;font-size:5.1px;color:#3434ea;-webkit-text-stroke:0.08px #3434ea">0.00</div>
<div class="t" style="left:578.5px;width:17.5px;text-align:center;top:323.59px;font-size:5.1px;color:#3434ea;-webkit-text-stroke:0.08px #3434ea">0.00</div>
<div class="t" style="left:596px;width:23px;text-align:center;top:323.59px;font-size:5.1px;color:#3434ea;-webkit-text-stroke:0.08px #3434ea">0.00</div>
<div class="a" style="left:291.5px;top:330.57px;width:328.5px;height:9.19px;background:#fffde0"></div>
<div class="t" style="left:291.5px;width:97.5px;text-align:center;top:332.87px;font-size:5px;color:#202020;-webkit-text-stroke:0.08px #202020">L1-7-5 备用</div>
<div class="t" style="left:389px;width:23px;text-align:center;top:332.77px;font-size:5.1px;color:#3434ea;-webkit-text-stroke:0.08px #3434ea">0.00</div>
<div class="t" style="left:412px;width:24.5px;text-align:center;top:332.77px;font-size:5.1px;color:#3434ea;-webkit-text-stroke:0.08px #3434ea">0.00</div>
<div class="t" style="left:436.5px;width:23.0px;text-align:center;top:332.77px;font-size:5.1px;color:#3434ea;-webkit-text-stroke:0.08px #3434ea">0.00</div>
<div class="t" style="left:459.5px;width:23.0px;text-align:center;top:332.77px;font-size:5.1px;color:#3434ea;-webkit-text-stroke:0.08px #3434ea">0.00</div>
<div class="t" style="left:482.5px;width:23.0px;text-align:center;top:332.77px;font-size:5.1px;color:#3434ea;-webkit-text-stroke:0.08px #3434ea">0.00</div>
<div class="t" style="left:505.5px;width:23.0px;text-align:center;top:332.77px;font-size:5.1px;color:#3434ea;-webkit-text-stroke:0.08px #3434ea">0.00</div>
<div class="t" style="left:528.5px;width:24.0px;text-align:center;top:332.77px;font-size:5.1px;color:#3434ea;-webkit-text-stroke:0.08px #3434ea">0.00</div>
<div class="t" style="left:552.5px;width:26.0px;text-align:center;top:332.77px;font-size:5.1px;color:#3434ea;-webkit-text-stroke:0.08px #3434ea">0.00</div>
<div class="t" style="left:578.5px;width:17.5px;text-align:center;top:332.77px;font-size:5.1px;color:#3434ea;-webkit-text-stroke:0.08px #3434ea">0.00</div>
<div class="t" style="left:596px;width:23px;text-align:center;top:332.77px;font-size:5.1px;color:#3434ea;-webkit-text-stroke:0.08px #3434ea">0.00</div>
<div class="a" style="left:291.5px;top:339.76px;width:328.5px;height:9.19px;background:#e4e4e4"></div>
<div class="t" style="left:291.5px;width:97.5px;text-align:center;top:342.06px;font-size:5px;color:#202020;-webkit-text-stroke:0.08px #202020">L1-7-6 备用</div>
<div class="t" style="left:389px;width:23px;text-align:center;top:341.96px;font-size:5.1px;color:#3434ea;-webkit-text-stroke:0.08px #3434ea">0.00</div>
<div class="t" style="left:412px;width:24.5px;text-align:center;top:341.96px;font-size:5.1px;color:#3434ea;-webkit-text-stroke:0.08px #3434ea">0.00</div>
<div class="t" style="left:436.5px;width:23.0px;text-align:center;top:341.96px;font-size:5.1px;color:#3434ea;-webkit-text-stroke:0.08px #3434ea">0.00</div>
<div class="t" style="left:459.5px;width:23.0px;text-align:center;top:341.96px;font-size:5.1px;color:#3434ea;-webkit-text-stroke:0.08px #3434ea">0.00</div>
<div class="t" style="left:482.5px;width:23.0px;text-align:center;top:341.96px;font-size:5.1px;color:#3434ea;-webkit-text-stroke:0.08px #3434ea">0.00</div>
<div class="t" style="left:505.5px;width:23.0px;text-align:center;top:341.96px;font-size:5.1px;color:#3434ea;-webkit-text-stroke:0.08px #3434ea">0.00</div>
<div class="t" style="left:528.5px;width:24.0px;text-align:center;top:341.96px;font-size:5.1px;color:#3434ea;-webkit-text-stroke:0.08px #3434ea">0.00</div>
<div class="t" style="left:552.5px;width:26.0px;text-align:center;top:341.96px;font-size:5.1px;color:#3434ea;-webkit-text-stroke:0.08px #3434ea">0.00</div>
<div class="t" style="left:578.5px;width:17.5px;text-align:center;top:341.96px;font-size:5.1px;color:#3434ea;-webkit-text-stroke:0.08px #3434ea">0.00</div>
<div class="t" style="left:596px;width:23px;text-align:center;top:341.96px;font-size:5.1px;color:#3434ea;-webkit-text-stroke:0.08px #3434ea">0.00</div>
<div class="a" style="left:291.5px;top:348.94px;width:328.5px;height:9.19px;background:#fffde0"></div>
<div class="t" style="left:291.5px;width:97.5px;text-align:center;top:351.24px;font-size:5px;color:#202020;-webkit-text-stroke:0.08px #202020">L1-7-7 备用</div>
<div class="t" style="left:389px;width:23px;text-align:center;top:351.14px;font-size:5.1px;color:#3434ea;-webkit-text-stroke:0.08px #3434ea">0.00</div>
<div class="t" style="left:412px;width:24.5px;text-align:center;top:351.14px;font-size:5.1px;color:#3434ea;-webkit-text-stroke:0.08px #3434ea">0.00</div>
<div class="t" style="left:436.5px;width:23.0px;text-align:center;top:351.14px;font-size:5.1px;color:#3434ea;-webkit-text-stroke:0.08px #3434ea">0.00</div>
<div class="t" style="left:459.5px;width:23.0px;text-align:center;top:351.14px;font-size:5.1px;color:#3434ea;-webkit-text-stroke:0.08px #3434ea">0.00</div>
<div class="t" style="left:482.5px;width:23.0px;text-align:center;top:351.14px;font-size:5.1px;color:#3434ea;-webkit-text-stroke:0.08px #3434ea">0.00</div>
<div class="t" style="left:505.5px;width:23.0px;text-align:center;top:351.14px;font-size:5.1px;color:#3434ea;-webkit-text-stroke:0.08px #3434ea">0.00</div>
<div class="t" style="left:528.5px;width:24.0px;text-align:center;top:351.14px;font-size:5.1px;color:#3434ea;-webkit-text-stroke:0.08px #3434ea">0.00</div>
<div class="t" style="left:552.5px;width:26.0px;text-align:center;top:351.14px;font-size:5.1px;color:#3434ea;-webkit-text-stroke:0.08px #3434ea">0.00</div>
<div class="t" style="left:578.5px;width:17.5px;text-align:center;top:351.14px;font-size:5.1px;color:#3434ea;-webkit-text-stroke:0.08px #3434ea">0.00</div>
<div class="t" style="left:596px;width:23px;text-align:center;top:351.14px;font-size:5.1px;color:#3434ea;-webkit-text-stroke:0.08px #3434ea">0.00</div>
<div class="a" style="left:291.5px;top:358.13px;width:328.5px;height:9.19px;background:#e4e4e4"></div>
<div class="t" style="left:291.5px;width:97.5px;text-align:center;top:360.43px;font-size:5px;color:#202020;-webkit-text-stroke:0.08px #202020">L1-8-1 备用</div>
<div class="t" style="left:389px;width:23px;text-align:center;top:360.33px;font-size:5.1px;color:#3434ea;-webkit-text-stroke:0.08px #3434ea">0.00</div>
<div class="t" style="left:412px;width:24.5px;text-align:center;top:360.33px;font-size:5.1px;color:#3434ea;-webkit-text-stroke:0.08px #3434ea">0.00</div>
<div class="t" style="left:436.5px;width:23.0px;text-align:center;top:360.33px;font-size:5.1px;color:#3434ea;-webkit-text-stroke:0.08px #3434ea">0.00</div>
<div class="t" style="left:459.5px;width:23.0px;text-align:center;top:360.33px;font-size:5.1px;color:#3434ea;-webkit-text-stroke:0.08px #3434ea">0.00</div>
<div class="t" style="left:482.5px;width:23.0px;text-align:center;top:360.33px;font-size:5.1px;color:#3434ea;-webkit-text-stroke:0.08px #3434ea">0.00</div>
<div class="t" style="left:505.5px;width:23.0px;text-align:center;top:360.33px;font-size:5.1px;color:#3434ea;-webkit-text-stroke:0.08px #3434ea">0.00</div>
<div class="t" style="left:528.5px;width:24.0px;text-align:center;top:360.33px;font-size:5.1px;color:#3434ea;-webkit-text-stroke:0.08px #3434ea">0.00</div>
<div class="t" style="left:552.5px;width:26.0px;text-align:center;top:360.33px;font-size:5.1px;color:#3434ea;-webkit-text-stroke:0.08px #3434ea">0.00</div>
<div class="t" style="left:578.5px;width:17.5px;text-align:center;top:360.33px;font-size:5.1px;color:#3434ea;-webkit-text-stroke:0.08px #3434ea">0.00</div>
<div class="t" style="left:596px;width:23px;text-align:center;top:360.33px;font-size:5.1px;color:#3434ea;-webkit-text-stroke:0.08px #3434ea">0.00</div>
<div class="a" style="left:291.5px;top:367.31px;width:328.5px;height:9.19px;background:#fffde0"></div>
<div class="t" style="left:291.5px;width:97.5px;text-align:center;top:369.61px;font-size:5px;color:#202020;-webkit-text-stroke:0.08px #202020">L1-8-2 备用</div>
<div class="t" style="left:389px;width:23px;text-align:center;top:369.51px;font-size:5.1px;color:#3434ea;-webkit-text-stroke:0.08px #3434ea">0.00</div>
<div class="t" style="left:412px;width:24.5px;text-align:center;top:369.51px;font-size:5.1px;color:#3434ea;-webkit-text-stroke:0.08px #3434ea">0.00</div>
<div class="t" style="left:436.5px;width:23.0px;text-align:center;top:369.51px;font-size:5.1px;color:#3434ea;-webkit-text-stroke:0.08px #3434ea">0.00</div>
<div class="t" style="left:459.5px;width:23.0px;text-align:center;top:369.51px;font-size:5.1px;color:#3434ea;-webkit-text-stroke:0.08px #3434ea">0.00</div>
<div class="t" style="left:482.5px;width:23.0px;text-align:center;top:369.51px;font-size:5.1px;color:#3434ea;-webkit-text-stroke:0.08px #3434ea">0.00</div>
<div class="t" style="left:505.5px;width:23.0px;text-align:center;top:369.51px;font-size:5.1px;color:#3434ea;-webkit-text-stroke:0.08px #3434ea">0.00</div>
<div class="t" style="left:528.5px;width:24.0px;text-align:center;top:369.51px;font-size:5.1px;color:#3434ea;-webkit-text-stroke:0.08px #3434ea">0.00</div>
<div class="t" style="left:552.5px;width:26.0px;text-align:center;top:369.51px;font-size:5.1px;color:#3434ea;-webkit-text-stroke:0.08px #3434ea">0.00</div>
<div class="t" style="left:578.5px;width:17.5px;text-align:center;top:369.51px;font-size:5.1px;color:#3434ea;-webkit-text-stroke:0.08px #3434ea">0.00</div>
<div class="t" style="left:596px;width:23px;text-align:center;top:369.51px;font-size:5.1px;color:#3434ea;-webkit-text-stroke:0.08px #3434ea">0.00</div>
<div class="a" style="left:291.5px;top:128.5px;width:1px;height:248.0px;background:#d8dcdc"></div>
<div class="a" style="left:389px;top:128.5px;width:1px;height:248.0px;background:#d8dcdc"></div>
<div class="a" style="left:412px;top:128.5px;width:1px;height:248.0px;background:#d8dcdc"></div>
<div class="a" style="left:436.5px;top:128.5px;width:1px;height:248.0px;background:#d8dcdc"></div>
<div class="a" style="left:459.5px;top:128.5px;width:1px;height:248.0px;background:#d8dcdc"></div>
<div class="a" style="left:482.5px;top:128.5px;width:1px;height:248.0px;background:#d8dcdc"></div>
<div class="a" style="left:505.5px;top:128.5px;width:1px;height:248.0px;background:#d8dcdc"></div>
<div class="a" style="left:528.5px;top:128.5px;width:1px;height:248.0px;background:#d8dcdc"></div>
<div class="a" style="left:552.5px;top:128.5px;width:1px;height:248.0px;background:#d8dcdc"></div>
<div class="a" style="left:578.5px;top:128.5px;width:1px;height:248.0px;background:#d8dcdc"></div>
<div class="a" style="left:596px;top:128.5px;width:1px;height:248.0px;background:#d8dcdc"></div>
<div class="a" style="left:619px;top:128.5px;width:1px;height:248.0px;background:#d8dcdc"></div>
<div class="a" style="left:650.7px;top:83px;width:7.3px;height:293.7px;background:#f0f0f0"></div>
<div class="a" style="left:651.7px;top:89px;width:5.5px;height:33px;background:#cdcdcd"></div>
<svg class="a" style="left:651.5px;top:84.5px" width="6" height="4" viewBox="0 0 6 4"><path d="M0.8 3.2 L3 1 L5.2 3.2" fill="none" stroke="#606060" stroke-width="0.9"></path></svg>
<svg class="a" style="left:651.5px;top:371.5px" width="6" height="4" viewBox="0 0 6 4"><path d="M0.8 0.8 L3 3 L5.2 0.8" fill="none" stroke="#606060" stroke-width="0.9"></path></svg>
<div class="a" style="left:2px;top:345.3px;width:62.8px;height:70.2px;background:#f0f0f0;border:1px solid #fff"></div>
<div class="t" style="left:4px;top:347.8px;font-size:5.3px;color:#a8a8a8">功能面板</div>
<svg class="a" style="left:55.5px;top:347px" width="6" height="6" viewBox="0 0 6 6"><path d="M0.6 0.6l4.8 4.8M5.4 0.6l-4.8 4.8" stroke="#a0a0a0" stroke-width="0.7"></path></svg>
<div class="a" style="left:21.3px;top:358.6px;width:26.3px;height:8px;background:#e6e6e6;border:1px solid #adadad;border-color:#fff #c0c0c0 #c0c0c0 #fff"></div>
<div class="t" style="left:21.3px;width:26.3px;text-align:center;top:360.10px;font-size:5px;color:#181818;-webkit-text-stroke:0.12px #181818">注销</div>
<div class="a" style="left:5.3px;top:368.8px;width:27.6px;height:7.7px;background:#e6e6e6;border:1px solid #adadad;border-color:#fff #c0c0c0 #c0c0c0 #fff"></div>
<div class="t" style="left:5.3px;width:27.6px;text-align:center;top:370.15px;font-size:5px;color:#181818;-webkit-text-stroke:0.12px #181818">默认状态</div>
<div class="a" style="left:34.6px;top:368.8px;width:28.4px;height:7.7px;background:#e6e6e6;border:1px solid #adadad;border-color:#fff #c0c0c0 #c0c0c0 #fff"></div>
<div class="t" style="left:34.6px;width:28.4px;text-align:center;top:370.15px;font-size:5px;color:#181818;-webkit-text-stroke:0.12px #181818">首页</div>
<div class="a" style="left:5.3px;top:380px;width:27.6px;height:7.7px;background:#e6e6e6;border:1px solid #adadad;border-color:#fff #c0c0c0 #c0c0c0 #fff"></div>
<div class="t" style="left:5.3px;width:27.6px;text-align:center;top:381.35px;font-size:5px;color:#181818;-webkit-text-stroke:0.12px #181818">事件窗口</div>
<div class="a" style="left:34.6px;top:380px;width:28.4px;height:7.7px;background:#e6e6e6;border:1px solid #adadad;border-color:#fff #c0c0c0 #c0c0c0 #fff"></div>
<div class="t" style="left:34.6px;width:28.4px;text-align:center;top:381.35px;font-size:5px;color:#181818;-webkit-text-stroke:0.12px #181818">遥控操作</div>
<div class="a" style="left:5.3px;top:391.3px;width:27.6px;height:7.7px;background:#e6e6e6;border:1px solid #adadad;border-color:#fff #c0c0c0 #c0c0c0 #fff"></div>
<div class="t" style="left:5.3px;width:27.6px;text-align:center;top:392.65px;font-size:5px;color:#181818;-webkit-text-stroke:0.12px #181818">历史事件</div>
<div class="a" style="left:34.6px;top:391.3px;width:28.4px;height:7.7px;background:#e6e6e6;border:1px solid #adadad;border-color:#fff #c0c0c0 #c0c0c0 #fff"></div>
<div class="t" style="left:34.6px;width:28.4px;text-align:center;top:392.65px;font-size:5px;color:#181818;-webkit-text-stroke:0.12px #181818">报表查询</div>
<div class="a" style="left:5.3px;top:402.6px;width:27.6px;height:7.7px;background:#e6e6e6;border:1px solid #adadad;border-color:#fff #c0c0c0 #c0c0c0 #fff"></div>
<div class="t" style="left:5.3px;width:27.6px;text-align:center;top:403.95px;font-size:5px;color:#181818;-webkit-text-stroke:0.12px #181818">历史曲线</div>
<div class="a" style="left:34.6px;top:402.6px;width:28.4px;height:7.7px;background:#e6e6e6;border:1px solid #adadad;border-color:#fff #c0c0c0 #c0c0c0 #fff"></div>
<div class="t" style="left:34.6px;width:28.4px;text-align:center;top:403.95px;font-size:5px;color:#181818;-webkit-text-stroke:0.12px #181818">退出</div>
<div class="a" style="left:0;top:425px;width:800px;height:7.75px;background:#f0f0f0;border-top:1px solid #fff"></div>
<div class="a" style="left:44px;top:425.5px;width:1px;height:7px;background:#d0d0d0"></div>
<div class="a" style="left:113.75px;top:425.5px;width:1px;height:7px;background:#d0d0d0"></div>
<div class="a" style="left:222px;top:425.5px;width:1px;height:7px;background:#d0d0d0"></div>
<div class="a" style="left:262px;top:425.5px;width:1px;height:7px;background:#d0d0d0"></div>
<div class="a" style="left:332.5px;top:425.5px;width:1px;height:7px;background:#d0d0d0"></div>
<div class="a" style="left:376px;top:425.5px;width:1px;height:7px;background:#d0d0d0"></div>
<div class="a" style="left:417px;top:425.5px;width:1px;height:7px;background:#d0d0d0"></div>
<div class="a" style="left:487px;top:425.5px;width:1px;height:7px;background:#d0d0d0"></div>
<div class="a" style="left:575px;top:425.5px;width:1px;height:7px;background:#d0d0d0"></div>
<div class="a" style="left:16px;top:426px;width:26px;height:6px;background:#fafafa"></div>
<div class="t" style="left: 2px; top: 427.1px; font-size: 4.67px; color: rgb(64, 64, 64);">准备好</div>
<div class="t" style="left: 46px; top: 427.1px; font-size: 5.11px; color: rgb(64, 64, 64);">版本Ver 2.2.0 LEG 3.3.18</div>
<div class="t" style="left: 116px; top: 427.1px; font-size: 5.18px; color: rgb(64, 64, 64);">系统时间：2022年07月06日  23:51:52  星期三</div>
<div class="t" style="left: 264.5px; top: 427.1px; font-size: 5.12px; color: rgb(64, 64, 64);">安全运行天数：74</div>
<div class="t" style="left: 333.75px; top: 427.1px; font-size: 5.23px; color: rgb(64, 64, 64);">当前用户：Manager</div>
<div class="t" style="left: 420px; top: 427.1px; font-size: 5.13px; color: rgb(64, 64, 64);">加密狗状态：异常</div>
<div class="t" style="left: 490px; top: 427.1px; font-size: 5.01px; color: rgb(64, 64, 64);">提示：按Alt+D组合键打开功能面板</div>
<div class="a" style="left:699px;top:422px;width:94px;height:1.5px;background:#e8eef2"></div>
<div class="a" style="left:699px;top:423.5px;width:94px;height:9.3px;background:#fff"></div>
<svg class="a" style="left:699px;top:420px" width="94" height="14" viewBox="0 0 94 14"><g transform="rotate(-14 7.5 7)"><rect x="2.2" y="1.8" width="10.5" height="10.5" rx="1.5" fill="#f05a28"></rect><path d="M10.3 4.6 C9.5 3.6 5.2 3.4 5 5.4 C4.8 7.2 10.2 6.6 10 8.8 C9.8 10.8 5.2 10.6 4.4 9.4" fill="none" stroke="#fff" stroke-width="1.6" stroke-linecap="round"></path></g><path d="M16.5 12 L19.2 4.5 L21.9 12 M17.5 9.6h3.4" fill="none" stroke="#2a7ad8" stroke-width="1.1"></path><circle cx="28.2" cy="7.5" r="0.8" fill="#2a7ad8"></circle><circle cx="30.6" cy="9.2" r="0.9" fill="#2a7ad8"></circle><circle cx="40" cy="8.6" r="3.2" fill="#2a7ad8"></circle><circle cx="38.8" cy="8" r="0.5" fill="#fff"></circle><circle cx="41.2" cy="8" r="0.5" fill="#fff"></circle><path d="M38.6 9.6 q1.4 1.2 2.8 0" stroke="#fff" stroke-width="0.6" fill="none"></path><rect x="48" y="4.5" width="2.4" height="5" rx="1.2" fill="#2a7ad8"></rect><path d="M47.3 8.5 q1.9 2.5 3.8 0 M49.2 10.5v2" stroke="#2a7ad8" stroke-width="0.7" fill="none"></path><rect x="56.5" y="5.5" width="7" height="6" rx="1" fill="#4a90e2"></rect><path d="M57.8 7.5h4.4M57.8 9.5h4.4" stroke="#fff" stroke-width="0.6"></path><circle cx="68.2" cy="6.3" r="1.5" fill="#d8d8d8"></circle><path d="M65.5 12 q0-3.5 2.7-3.5 q2.7 0 2.7 3.5z" fill="#d8d8d8"></path><path d="M76 5.5 l2-1 h2 l2 1 l1.2 2.2 -1.5 0.8 v3.5 h-5.4 v-3.5 l-1.5-0.8z" fill="#2a6ad0"></path><path d="M86.8 4.5h2v2h-2zM90.2 4.5h2v2h-2zM86.8 8h2v2h-2zM90.2 8h2v2h-2z M87.8 6.5v1.5 M91.2 6.5v1.5" fill="#2a7ad8" stroke="#2a7ad8" stroke-width="0.6"></path></svg>
<div class="a" style="left:0;top:432.75px;width:800px;height:17.25px;background:#060608"></div>
<svg class="a" style="left:6px;top:437.5px" width="8" height="8" viewBox="0 0 8 8"><path d="M0 1.2 L3.4 0.7 V3.7 H0Z M3.9 0.6 L8 0 V3.7 H3.9Z M0 4.2 H3.4 V7.3 L0 6.8Z M3.9 4.2 H8 V8 L3.9 7.4Z" fill="#fff"></path></svg>
<div class="a" style="left:29px;top:437.5px;width:5px;height:5px;border:1px solid #ddd;border-radius:50%"></div>
<div class="a" style="left:26.5px;top:443px;width:3.5px;height:1px;background:#ddd;transform:rotate(-45deg)"></div>
<div class="a" style="left:46.5px;top:438.5px;width:7px;height:5.5px;border:1px solid #ccc;border-radius:1.5px"></div>
<div class="a" style="left:45px;top:439.5px;width:1px;height:3.5px;background:#ccc"></div>
<div class="a" style="left:54px;top:439.5px;width:1px;height:3.5px;background:#ccc"></div>
<svg class="a" style="left:66.5px;top:437.3px" width="9.5" height="8" viewBox="0 0 19 16"><path d="M0 2h7l2 2h10v12H0z" fill="#f8d870"></path><path d="M0 6h19v10H0z" fill="#fbe39a"></path><path d="M0 11h19v5H0z" fill="#3aa0e8"></path><path d="M6 11h7v5H6z" fill="#f8d870"></path><path d="M7.5 13h4v3h-4z" fill="#3aa0e8"></path></svg>
<svg class="a" style="left:86.5px;top:437px" width="10" height="9" viewBox="0 0 20 18"><path d="M2 6l10-4 7 2v9l-9 4-8-3z" fill="#c8d0d8"></path><path d="M5 6l8-3v7l-8 3z" fill="#f0f4f8"></path><path d="M11 9l7-2v6l-7 3z" fill="#9aa8b4"></path></svg>
<svg class="a" style="left:107.3px;top:437px" width="9" height="9" viewBox="0 0 18 18"><rect x="0" y="0" width="18" height="18" rx="1" fill="#3c82e6"></rect><path d="M5 4v10M13 4v10M5 9h8M7 4h4" stroke="#fff" stroke-width="1.6" fill="none"></path></svg>
<div class="a" style="left:127.5px;top:437px;width:4.3px;height:4.3px;background:#e84040"></div>
<div class="a" style="left:132.4px;top:437px;width:4.3px;height:4.3px;background:#5a90e8"></div>
<div class="a" style="left:127.5px;top:441.9px;width:4.3px;height:4.3px;background:#f0d060"></div>
<div class="a" style="left:132.4px;top:441.9px;width:4.3px;height:4.3px;background:#60c060"></div>
<svg class="a" style="left:147.3px;top:437.3px" width="10.2" height="8.4" viewBox="0 0 20 16"><rect x="0" y="0" width="20" height="16" fill="#100408"></rect><path d="M0 1.5h20M0 14.5h20" stroke="#5080c0" stroke-width="1.2"></path><path d="M3 3v10M7 3v10M11 3v10M15 3v10" stroke="#8a1010" stroke-width="2.2"></path></svg>
<div class="a" style="left:62.5px;top:448.9px;width:17px;height:1.1px;background:#80b0e0"></div>
<div class="a" style="left:82.5px;top:448.9px;width:17px;height:1.1px;background:#80b0e0"></div>
<div class="a" style="left:102.5px;top:448.9px;width:17px;height:1.1px;background:#80b0e0"></div>
<div class="a" style="left:122.5px;top:448.9px;width:17px;height:1.1px;background:#80b0e0"></div>
<div class="a" style="left:142.5px;top:448.9px;width:17px;height:1.1px;background:#80b0e0"></div>
<svg class="a" style="left:680px;top:436px" width="70" height="11" viewBox="0 0 70 11"><path d="M1.5 6.5 L4.5 3.5 L7.5 6.5" fill="none" stroke="#ddd" stroke-width="0.9"></path><rect x="11" y="2.5" width="6.5" height="5" fill="none" stroke="#ddd" stroke-width="0.9"></rect><path d="M10 4v5h5" fill="none" stroke="#ddd" stroke-width="0.8"></path><path d="M20.5 4h1.5l2.5-2v8l-2.5-2h-1.5z" fill="none" stroke="#ddd" stroke-width="0.8"></path><path d="M26 4.5l1.5 1.5M27.5 4.5l-1.5 1.5" stroke="#ddd" stroke-width="0.6"></path><rect x="30.5" y="2.5" width="10" height="6" rx="0.8" fill="none" stroke="#bbb" stroke-width="0.8"></rect><path d="M32 6.5h7" stroke="#999" stroke-width="0.8"></path><path d="M32 4.5h7" stroke="#777" stroke-width="0.6" stroke-dasharray="0.8 0.6"></path><path d="M44 9.5 L46.5 2.5 L49 9.5 M45 7.3h3" fill="none" stroke="#ddd" stroke-width="0.8"></path><g transform="rotate(-12 59 6)"><rect x="55.5" y="2.5" width="7" height="7" rx="1" fill="#f05a28"></rect><path d="M61 4.2 C60.4 3.6 57.6 3.5 57.5 4.8 C57.4 6 61 5.7 60.9 7.2 C60.8 8.5 57.8 8.4 57.2 7.6" fill="none" stroke="#fff" stroke-width="1"></path></g></svg>
<div class="t" style="left:754px;top:434.5px;width:16px;text-align:center;font-size:6px;color:#eee">23:51</div>
<div class="t" style="left:750px;top:442.5px;width:24px;text-align:center;font-size:6px;color:#eee">2022/7/6</div>
<svg class="a" style="left:782px;top:436px" width="14" height="12" viewBox="0 0 14 12"><path d="M1.5 1.5h8v6h-4l-2 2v-2h-2z" fill="none" stroke="#eee" stroke-width="0.9"></path><path d="M3 3.5h5M3 5.5h4" stroke="#eee" stroke-width="0.6"></path><circle cx="9.5" cy="8" r="2.8" fill="#060608" stroke="#ddd" stroke-width="0.8"></circle><path d="M9.5 6.6v2.8" stroke="#ddd" stroke-width="0.7"></path></svg>
</body></html>
